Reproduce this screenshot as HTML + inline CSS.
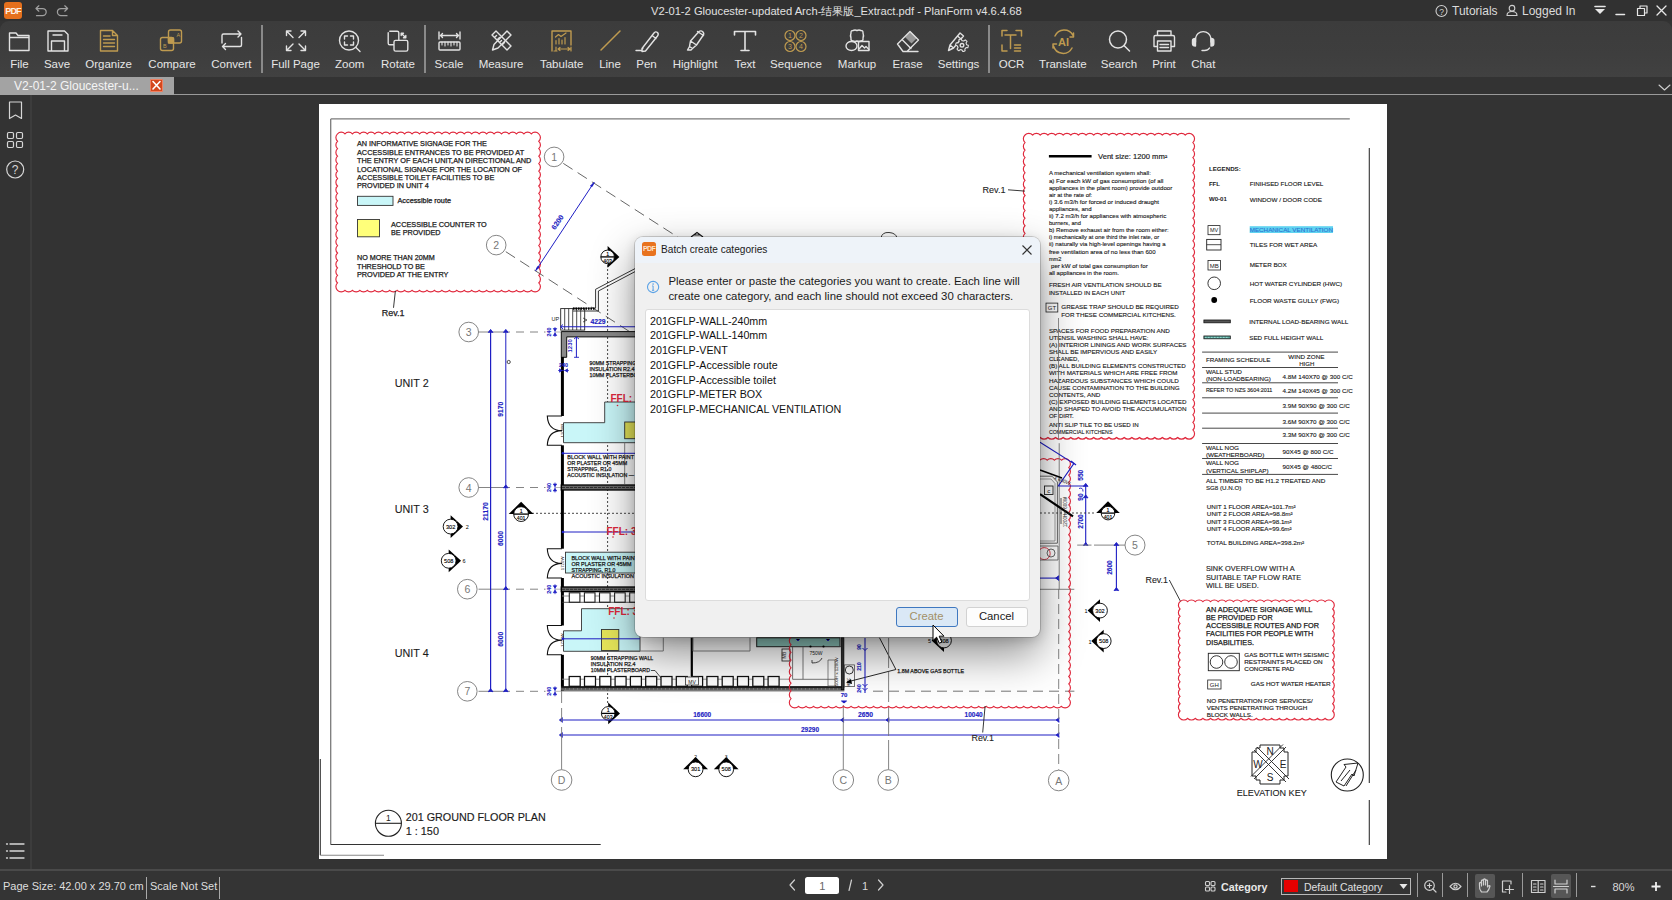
<!DOCTYPE html>
<html><head><meta charset="utf-8">
<style>
*{margin:0;padding:0;box-sizing:border-box}
html,body{width:1672px;height:900px;overflow:hidden;background:#333333;font-family:"Liberation Sans",sans-serif;position:relative}
.abs{position:absolute}
#titlebar{left:0;top:0;width:1672px;height:21px;background:#313131}
#toolbar{left:0;top:20.8px;width:1672px;height:56.2px;background:linear-gradient(#3c3c3c,#3e3e3e 60%,#414141);border-radius:9px 9px 0 0}
#tabbar{left:0;top:77px;width:1672px;height:18.3px;background:#333;border-bottom:1.6px solid #9a9a9a}
#sidebar{left:0;top:95px;width:32px;height:775px;background:#333;border-right:2px solid #3c3c3c}
#status{left:0;top:869px;width:1672px;height:31px;background:#343434;border-top:2px solid #4a4a4a}
.tl{position:absolute;top:57px;font-size:11.5px;line-height:14px;color:#e6e6e6;white-space:nowrap;transform:translateX(-50%)}
.t{position:absolute;white-space:nowrap}
.sep{position:absolute;top:25px;width:2px;height:48px;background:#8a8a8a}
#page{left:319px;top:104px;width:1068px;height:755px;background:#fff}
svg{position:absolute;left:0;top:0;overflow:visible}
</style></head><body>
<div id="titlebar" class="abs"></div>
<div id="toolbar" class="abs"></div>
<div id="tabbar" class="abs"></div>
<div id="sidebar" class="abs"></div>
<div id="status" class="abs"></div>
<div id="page" class="abs"></div>

<!-- title bar content -->
<div class="t" style="left:4px;top:2px;width:18px;height:17px;background:#e5701d;border-radius:3px"></div>
<div class="t" style="left:4px;top:4.5px;width:18px;text-align:center;font-size:9px;line-height:12px;font-weight:bold;color:#fdf0e6;letter-spacing:-0.9px">PDF</div>
<div class="t" style="left:651px;top:4px;font-size:11.2px;line-height:14px;color:#e0e0e0">V2-01-2 Gloucester-updated Arch-结果版_Extract.pdf - PlanForm v4.6.4.68</div>
<div class="t" style="left:1452px;top:4px;font-size:12px;line-height:14px;color:#dcdcdc">Tutorials</div>
<div class="t" style="left:1522px;top:4px;font-size:12px;line-height:14px;color:#dcdcdc">Logged In</div>

<!-- tab -->
<div class="t" style="left:0;top:77px;width:174px;height:18px;background:#a3a3a3"></div>
<div class="t" style="left:14px;top:78px;font-size:12px;line-height:16px;color:#f4f4f4">V2-01-2 Gloucester-u...</div>
<div class="t" style="left:150px;top:79px;width:13px;height:13px;background:#d4481e;border:1px solid #f08060;border-radius:1px"></div>

<!-- toolbar labels -->
<div class="tl" style="left:19.5px">File</div>
<div class="tl" style="left:57px">Save</div>
<div class="tl" style="left:108.6px">Organize</div>
<div class="tl" style="left:172px">Compare</div>
<div class="tl" style="left:231.4px">Convert</div>
<div class="sep" style="left:261px"></div>
<div class="tl" style="left:295.5px">Full Page</div>
<div class="tl" style="left:349.7px">Zoom</div>
<div class="tl" style="left:398px">Rotate</div>
<div class="sep" style="left:424px"></div>
<div class="tl" style="left:449px">Scale</div>
<div class="tl" style="left:501px">Measure</div>
<div class="tl" style="left:561.7px">Tabulate</div>
<div class="tl" style="left:610px">Line</div>
<div class="tl" style="left:646.5px">Pen</div>
<div class="tl" style="left:695px">Highlight</div>
<div class="tl" style="left:745px">Text</div>
<div class="tl" style="left:796px">Sequence</div>
<div class="tl" style="left:857px">Markup</div>
<div class="tl" style="left:907.6px">Erase</div>
<div class="tl" style="left:958.5px">Settings</div>
<div class="sep" style="left:988px"></div>
<div class="tl" style="left:1011.6px">OCR</div>
<div class="tl" style="left:1062.8px">Translate</div>
<div class="tl" style="left:1119px">Search</div>
<div class="tl" style="left:1164px">Print</div>
<div class="tl" style="left:1203.3px">Chat</div>

<!-- status bar text -->
<div class="t" style="left:3px;top:879px;font-size:11px;line-height:14px;color:#dedede">Page Size: 42.00 x 29.70 cm</div>
<div class="t" style="left:146px;top:877px;width:1px;height:22px;background:#aaa"></div>
<div class="t" style="left:150px;top:879px;font-size:11px;line-height:14px;color:#dedede">Scale Not Set</div>
<div class="t" style="left:219px;top:877px;width:1px;height:22px;background:#aaa"></div>

<!--STATUS--><div class="t" style="left:1475px;top:874px;width:20px;height:23.5px;background:#565656;border-radius:2px"></div>
<div class="t" style="left:1551px;top:874px;width:20px;height:23.5px;background:#565656;border-radius:2px"></div>
<svg width="1672" height="900" style="position:absolute;left:0;top:0;overflow:visible">
<g fill="none" stroke="#cfcfcf" stroke-width="1.2" stroke-linecap="round" stroke-linejoin="round">
<path d="M794.5 880 L790 885 L794.5 890"/>
<path d="M878.5 880 L883 885 L878.5 890"/>
<path d="M849 890.5 L851.5 880"/>
<g stroke="#d0d0d0" stroke-width="1.1"><rect x="1205.5" y="881.5" width="4" height="4" rx="1"/><rect x="1211" y="881.5" width="4" height="4" rx="1"/><rect x="1205.5" y="887" width="4" height="4" rx="1"/><rect x="1211" y="887" width="4" height="4" rx="1"/></g>
<circle cx="1429.5" cy="885.5" r="4.8"/><path d="M1433 889 L1436 892 M1427.5 885.5 H1431.5 M1429.5 883.5 V887.5"/>
<path d="M1450 886.5 Q1455.5 880 1461 886.5 Q1455.5 893 1450 886.5 Z"/><circle cx="1455.5" cy="886.5" r="1.6"/>
<path d="M1502.5 881 H1511 V884 M1502.5 881 V892 H1506 M1509.5 885.5 V893.5 M1505.5 889.5 H1513.5"/>
<path d="M1531.5 880.5 H1545 V892.5 H1531.5 Z M1538.2 880.5 V892.5 M1533.5 884 H1536 M1533.5 887 H1536 M1533.5 890 H1536 M1540.5 884 H1543 M1540.5 887 H1543 M1540.5 890 H1543"/>
<path d="M1555 880 V884 H1567 V880 M1555 893 V889 H1567 V893 M1553.5 886.5 H1568.5"/>
<path d="M1481.5 892 Q1479 889 1479.5 885.5 V883 Q1480.5 882 1481.5 883 V886 V880.5 Q1482.5 879.5 1483.5 880.5 V885 V879.5 Q1484.5 878.5 1485.5 879.5 V885 V880.5 Q1486.5 879.5 1487.5 880.5 V887 Q1489 885 1490 886 Q1489 890 1487 892 Z"/>
</g>
<path d="M1591 886.5 H1595.5" stroke="#e0e0e0" stroke-width="1.4"/>
<path d="M1651.5 886.5 H1660.5 M1656 882 V891" stroke="#f0f0f0" stroke-width="1.8"/>
<path d="M1399.5 884 H1407.5 L1403.5 889 Z" fill="#e8e8e8"/>
</svg>
<div class="t" style="left:805.3px;top:876.7px;width:34px;height:17.5px;background:#fff;border-radius:2.5px"></div>
<div class="t" style="left:805.3px;top:878.5px;width:34px;text-align:center;font-size:11px;line-height:14px;color:#666">1</div>
<div class="t" style="left:862px;top:879px;font-size:11px;line-height:14px;color:#d8d8d8">1</div>
<div class="t" style="left:1220.6px;top:879.5px;font-size:11.5px;line-height:14px;color:#e8e8e8;font-weight:bold;transform:scaleX(0.93);transform-origin:0 0">Category</div>
<div class="t" style="left:1280.9px;top:877.6px;width:130.6px;height:17.2px;border:1px solid #b8b8b8;background:transparent"></div>
<div class="t" style="left:1284.4px;top:880px;width:13.2px;height:12.4px;background:#e50000"></div>
<div class="t" style="left:1303.5px;top:879.5px;font-size:11px;line-height:14px;color:#e0e0e0;transform:scaleX(0.95);transform-origin:0 0">Default Category</div>
<div class="t" style="left:1417px;top:873px;width:1px;height:24px;background:#9a9a9a"></div>
<div class="t" style="left:1442px;top:873px;width:1px;height:24px;background:#9a9a9a"></div>
<div class="t" style="left:1467px;top:873px;width:1px;height:24px;background:#9a9a9a"></div>
<div class="t" style="left:1521.5px;top:873px;width:1px;height:24px;background:#9a9a9a"></div>
<div class="t" style="left:1575.5px;top:873px;width:1px;height:24px;background:#9a9a9a"></div>


<div class="t" style="left:1612.4px;top:879.5px;font-size:11px;line-height:14px;color:#d8d8d8">80%</div>
<!--/STATUS--><!--ICONS--><svg width="1672" height="900" viewBox="0 0 1672 900" style="position:absolute;left:0;top:0;pointer-events:none">
<g fill="none" stroke="#e2e2e2" stroke-width="1.4" stroke-linejoin="round" stroke-linecap="round">
<!-- undo / redo -->
<path d="M38.8 5.8 L36 8.5 L38.8 11.2 M36.3 8.5 H42.6 a3.6 3.6 0 0 1 0 7.2 H36.5" stroke="#a0a0a0" stroke-width="1.25"/>
<path d="M64.8 5.8 L67.6 8.5 L64.8 11.2 M67.3 8.5 H61 a3.6 3.6 0 0 0 0 7.2 H67" stroke="#a0a0a0" stroke-width="1.25"/>
<!-- File folder -->
<path d="M9.5 33 H16 L18 35.5 H29 V50.5 H9.5 Z M9.5 37.5 H29"/>
<!-- Save -->
<path d="M48 31 H64.5 L68 34.5 V51 H48 Z M53 35 H62 M51.5 51 V41 H64.5 V51"/>
<!-- Organize gold -->
<path d="M100.5 30.5 H112.5 L117.5 35.5 V51 H100.5 Z M112.5 30.5 V35.5 H117.5 M103.5 36 H110 M103.5 39.5 H114.5 M103.5 43 H114.5 M103.5 46.5 H114.5" stroke="#bf9b50"/>
<!-- Compare gold -->
<g stroke="#bf9b50"><rect x="168.5" y="30" width="13" height="13" rx="2"/><rect x="160.5" y="37.5" width="13" height="13" rx="2"/><rect x="168.5" y="38" width="5" height="5" fill="#bf9b50"/></g>
<text x="176.5" y="37.3" font-size="5.5" fill="#bf9b50" stroke="none" font-family="Liberation Sans">A</text>
<text x="163" y="48" font-size="5.5" fill="#bf9b50" stroke="none" font-family="Liberation Sans">B</text>
<!-- Convert -->
<path d="M222 43 V35.5 Q222 34 223.5 34 H241 M238 31 L241 34 L238 37 M241.5 37.5 V45 Q241.5 46.5 240 46.5 H222.5 M225.5 43.5 L222.5 46.5 L225.5 49.5"/>
<!-- Full page -->
<path d="M286.5 31 L293 37.5 M286.5 31 H291 M286.5 31 V35.5 M305.5 31 L299 37.5 M305.5 31 H301 M305.5 31 V35.5 M286.5 50.5 L293 44 M286.5 50.5 H291 M286.5 50.5 V46 M305.5 50.5 L299 44 M305.5 50.5 H301 M305.5 50.5 V46"/>
<!-- Zoom -->
<circle cx="349" cy="40.5" r="9.5"/><path d="M356 47.5 L360 51.5 M344.5 39 V36 H347.5 M350.5 36 H353.5 V39 M353.5 42 V45 H350.5 M347.5 45 H344.5 V42"/>
<!-- Rotate -->
<path d="M389.8 31.2 H397.2 Q398.8 31.2 398.8 32.8 V40.2 M388.2 32.8 V43.2 Q388.2 44.8 389.8 44.8 H394 M395.6 40.4 H406.2 Q407.8 40.4 407.8 42 V49.5 Q407.8 51.1 406.2 51.1 H395.6 Q394 51.1 394 49.5 V42 Q394 40.4 395.6 40.4 Z M401.5 33.5 L405.5 37.5 M401.2 35.5 V33.2 H403.5 M405.8 35.5 V37.8 H403.5"/>
<!-- Scale -->
<path d="M439 32 V39 M460 32 V39 M440.5 35.5 H458.5 M442.5 33.5 L440.5 35.5 L442.5 37.5 M456.5 33.5 L458.5 35.5 L456.5 37.5"/>
<rect x="439" y="42" width="21" height="8" rx="1"/><path d="M442 42 V45 M445 42 V46 M448 42 V45 M451 42 V46 M454 42 V45 M457 42 V46" stroke-width="1.1"/>
<!-- Measure -->
<path d="M492 35 L496 31 L511 46 L507 50 Z M494.5 37.5 L496.5 35.5 M497 40 L499.5 37.5 M499.5 42.5 L501.5 40.5 M502 45 L504.5 42.5"/>
<path d="M507 31 L511 35 L498 48 L492.5 50 L494 44.5 Z"/>
<!-- Tabulate gold -->
<g stroke="#bf9b50"><path d="M552 51 V31 H571 V45"/><path d="M557 51 H554 M556 51 V47 M571 47 V51 M558 49 H570 M560 47.5 L558 49 L560 50.5 M568 47.5 L570 49 L568 50.5 M555.5 37 L558.5 34.5 L561 36.5 L566 33 M556 44 V40.5 M559 44 V38.5 M562 44 V40 M565 44 V37.5" stroke-width="1.2"/></g>
<!-- Line gold -->
<path d="M601 50 L620 31" stroke="#bf9b50" stroke-width="1.5"/>
<!-- Pen -->
<path d="M636 50.5 H641.5 L643 48 M642 48.5 L654 33 Q655.5 31 657.5 32.5 Q659 34 657.5 36 L645.5 51 L642 51.5 Z M652 35.5 L656 38.5"/>
<!-- Highlight -->
<path d="M699 31.5 Q701 30 703 32 Q704.5 34 703 35.5 L696.5 45 L690.5 41 Z M697.5 31.5 L703.5 35.5 M690.5 41 L689.5 46.5 L692.5 48.5 L696.5 45 M689.5 46.5 L687.5 50 H691 L692.5 48.5"/>
<!-- Text -->
<path d="M734.5 35 V31.5 H755.5 V35 M745 31.5 V50.5 M741 50.5 H749" stroke-width="1.6"/>
<!-- Sequence gold -->
<g stroke="#bf9b50" stroke-width="1.2"><circle cx="790" cy="35.5" r="5"/><circle cx="801" cy="35.5" r="5"/><circle cx="790" cy="46.5" r="5"/><circle cx="801" cy="46.5" r="5"/></g>
<g fill="#bf9b50" stroke="none" font-family="Liberation Sans" font-size="7" text-anchor="middle"><text x="790" y="38">1</text><text x="801" y="38">2</text><text x="790" y="49">3</text><text x="801" y="49">4</text></g>
<!-- Markup -->
<path d="M853 30.5 Q855 29.5 857 30.5 Q859 29.5 861 30.5 Q863.3 30.5 863 33 Q864 35.5 863 38 Q863.5 41 861 41 Q859 42 857 41 Q855 42 853 41 Q850.5 41 851 38 Q850 35.5 851 33 Q850.7 30.5 853 30.5 Z"/>
<ellipse cx="851.5" cy="46" rx="5.5" ry="4.5"/><rect x="858.5" y="41.5" width="10.5" height="9"/><path d="M859 49 L862 45.5 L864.5 48 L866 46.5 L869 49.5"/>
<!-- Erase -->
<path d="M897.5 44 L910 31.5 L918.5 40 L907 51.5 H903 Z M902 39.5 L911 48.5 M907 51.5 H918"/>
<path d="M905 37 L910.5 31.5 L917 38 L911.5 43.5 Z" stroke="none" fill="#e2e2e2" opacity="0.55"/>
<!-- Settings -->
<path d="M948.5 50.5 L950 45 L960 33 L963.5 36 L953.5 48 Z M950 45 L953.5 48 M957.5 36 L961 39"/>
<path d="M968.25 46.12 L968.09 46.93 L967.82 47.71 L965.99 47.60 L965.65 48.10 L965.26 48.55 L964.80 48.95 L965.15 50.75 L964.42 51.12 L963.64 51.38 L962.83 51.55 L962.00 49.90 L961.40 49.86 L960.81 49.74 L960.24 49.55 L958.85 50.76 L958.17 50.30 L957.55 49.76 L957.01 49.14 L958.02 47.60 L957.75 47.06 L957.56 46.49 L957.44 45.90 L955.70 45.31 L955.75 44.48 L955.91 43.67 L956.18 42.89 L958.01 43.00 L958.35 42.50 L958.74 42.05 L959.20 41.65 L958.85 39.85 L959.58 39.48 L960.36 39.22 L961.17 39.05 L962.00 40.70 L962.60 40.74 L963.19 40.86 L963.76 41.05 L965.15 39.84 L965.83 40.30 L966.45 40.84 L966.99 41.46 L965.98 43.00 L966.25 43.54 L966.44 44.11 L966.56 44.70 L968.30 45.29Z" stroke-width="1.1" fill="#3d3d3d"/><circle cx="962" cy="45.3" r="1.8"/>
<!-- OCR gold -->
<g stroke="#bf9b50" stroke-width="1.5"><path d="M1002 36 V30.5 H1007 M1016 30.5 H1021.5 V36 M1002 45 V51 H1007 M1005 35 H1016 M1010.5 35 V48.5 M1014.5 45 H1020.5 M1014.5 48 H1020.5 M1014.5 51 H1020.5"/></g>
<!-- Translate gold -->
<g stroke="#bf9b50" stroke-width="1.5"><path d="M1055 36 A10 10 0 0 1 1073 35.5 M1072 48 A10 10 0 0 1 1053.5 46 M1073.5 33 V37 H1070 M1053 48 V44 H1056.5"/></g>
<text x="1063.5" y="45.5" font-size="11" font-weight="bold" fill="#bf9b50" stroke="none" font-family="Liberation Sans" text-anchor="middle">AI</text>
<!-- Search -->
<circle cx="1118" cy="39.5" r="8.5" stroke-width="1.5"/><path d="M1124 45.5 L1129.5 51" stroke-width="1.5"/>
<!-- Print -->
<path d="M1157.5 35.5 V31 H1171 V35.5 M1157 46.5 H1154 V37 Q1154 35.5 1155.5 35.5 H1173 Q1174.5 35.5 1174.5 37 V46.5 H1171.5 M1157.5 41 H1171 V51 H1157.5 Z M1160 44.5 H1168.5 M1160 47.5 H1168.5"/>
<!-- Chat headset -->
<path d="M1195.5 42 V38.5 A7.8 7.8 0 0 1 1211 38.5 V42 M1209.5 48 Q1208 50.5 1204.5 50.5 H1202"/>
<path d="M1192.5 40.5 Q1192.5 38.5 1195.5 38.5 V46 Q1192.5 46 1192.5 43.5 Z M1213.8 40.5 Q1213.8 38.5 1211 38.5 V46 Q1213.8 46 1213.8 43.5 Z" fill="#e2e2e2"/>
<!-- title right icons -->
<circle cx="1441.5" cy="11" r="5.5" stroke="#cfcfcf" stroke-width="1.1"/>
<text x="1441.5" y="14.5" font-size="8.5" fill="#cfcfcf" stroke="none" font-family="Liberation Sans" text-anchor="middle">?</text>
<circle cx="1512" cy="8.2" r="2.8" stroke="#cfcfcf" stroke-width="1.1"/><path d="M1507 15.5 Q1507 11.5 1512 11.5 Q1517 11.5 1517 15.5 Z" stroke="#cfcfcf" stroke-width="1.1"/>
<path d="M1595 6.5 H1605" stroke="#e8e8e8" stroke-width="1.6"/><path d="M1595 9 H1605 L1600 14 Z" fill="#e8e8e8" stroke="none"/>
<path d="M1616 14.5 H1624.5" stroke="#e8e8e8" stroke-width="1.5"/>
<path d="M1637.5 8.5 H1644.5 V15.5 H1637.5 Z M1640 8.5 V6 H1647 V13 H1644.5" stroke="#e8e8e8" stroke-width="1.2"/>
<path d="M1657 6 L1666 15 M1666 6 L1657 15" stroke="#e8e8e8" stroke-width="1.3"/>
<!-- tab close x -->
<path d="M153 81.5 L160 89 M160 81.5 L153 89" stroke="#fff" stroke-width="1.6"/>
<!-- tabbar chevron -->
<path d="M1659 85 L1664.5 90 L1670 85" stroke="#cfcfcf" stroke-width="1.1"/>
<!-- sidebar icons -->
<path d="M9.5 102 H21.5 V118.5 L15.5 115 L9.5 118.5 Z" stroke="#d6d6d6" stroke-width="1.2"/>
<g stroke="#d6d6d6" stroke-width="1.2"><rect x="7.5" y="132.5" width="6" height="6" rx="1.2"/><rect x="16.5" y="132.5" width="6" height="6" rx="1.2"/><rect x="7.5" y="141.5" width="6" height="6" rx="1.2"/><rect x="16.5" y="141.5" width="6" height="6" rx="1.2"/></g>
<circle cx="15.2" cy="169.5" r="8.5" stroke="#d6d6d6" stroke-width="1.2"/>
<text x="15.2" y="174" font-size="12" fill="#d6d6d6" stroke="none" font-family="Liberation Sans" text-anchor="middle">?</text>
<g stroke="#d8d8d8" stroke-width="1.3"><path d="M10 844 H24 M10 851 H24 M10 858 H24"/><path d="M6.5 844 H7.5 M6.5 851 H7.5 M6.5 858 H7.5"/></g>
</g>
</svg>
<!--/ICONS-->
<!--PAGE--><svg width="1672" height="900" viewBox="0 0 1672 900" style="position:absolute;left:0;top:0">
<line x1="330.7" y1="118.9" x2="1349.8" y2="118.9" stroke="#7a7a7a" stroke-width="1.3" />
<line x1="330.7" y1="118.9" x2="330.7" y2="844.5" stroke="#7a7a7a" stroke-width="1.3" />
<line x1="330.7" y1="844.5" x2="600.7" y2="844.5" stroke="#333" stroke-width="1.1" />
<line x1="320.3" y1="759" x2="320.3" y2="855.3" stroke="#333" stroke-width="1.1" />
<line x1="320.3" y1="855.3" x2="384" y2="855.3" stroke="#888" stroke-width="1.1" />
<line x1="1369.3" y1="148" x2="1369.3" y2="783" stroke="#333" stroke-width="1.1" />
<line x1="1369.3" y1="800" x2="1369.3" y2="845" stroke="#333" stroke-width="1.1" />
<path d="M337.5 133.8 A5.07 5.07 0 0 1 344.96 133.80 A5.07 5.07 0 0 1 352.41 133.80 A5.07 5.07 0 0 1 359.87 133.80 A5.07 5.07 0 0 1 367.32 133.80 A5.07 5.07 0 0 1 374.78 133.80 A5.07 5.07 0 0 1 382.23 133.80 A5.07 5.07 0 0 1 389.69 133.80 A5.07 5.07 0 0 1 397.14 133.80 A5.07 5.07 0 0 1 404.60 133.80 A5.07 5.07 0 0 1 412.06 133.80 A5.07 5.07 0 0 1 419.51 133.80 A5.07 5.07 0 0 1 426.97 133.80 A5.07 5.07 0 0 1 434.42 133.80 A5.07 5.07 0 0 1 441.88 133.80 A5.07 5.07 0 0 1 449.33 133.80 A5.07 5.07 0 0 1 456.79 133.80 A5.07 5.07 0 0 1 464.24 133.80 A5.07 5.07 0 0 1 471.70 133.80 A5.07 5.07 0 0 1 479.16 133.80 A5.07 5.07 0 0 1 486.61 133.80 A5.07 5.07 0 0 1 494.07 133.80 A5.07 5.07 0 0 1 501.52 133.80 A5.07 5.07 0 0 1 508.98 133.80 A5.07 5.07 0 0 1 516.43 133.80 A5.07 5.07 0 0 1 523.89 133.80 A5.07 5.07 0 0 1 531.34 133.80 A5.07 5.07 0 0 1 538.80 133.80 A5.07 5.07 0 0 1 538.80 141.25 A5.07 5.07 0 0 1 538.80 148.70 A5.07 5.07 0 0 1 538.80 156.16 A5.07 5.07 0 0 1 538.80 163.61 A5.07 5.07 0 0 1 538.80 171.06 A5.07 5.07 0 0 1 538.80 178.51 A5.07 5.07 0 0 1 538.80 185.97 A5.07 5.07 0 0 1 538.80 193.42 A5.07 5.07 0 0 1 538.80 200.87 A5.07 5.07 0 0 1 538.80 208.32 A5.07 5.07 0 0 1 538.80 215.78 A5.07 5.07 0 0 1 538.80 223.23 A5.07 5.07 0 0 1 538.80 230.68 A5.07 5.07 0 0 1 538.80 238.13 A5.07 5.07 0 0 1 538.80 245.59 A5.07 5.07 0 0 1 538.80 253.04 A5.07 5.07 0 0 1 538.80 260.49 A5.07 5.07 0 0 1 538.80 267.94 A5.07 5.07 0 0 1 538.80 275.40 A5.07 5.07 0 0 1 538.80 282.85 A5.07 5.07 0 0 1 538.80 290.30 A5.07 5.07 0 0 1 531.34 290.30 A5.07 5.07 0 0 1 523.89 290.30 A5.07 5.07 0 0 1 516.43 290.30 A5.07 5.07 0 0 1 508.98 290.30 A5.07 5.07 0 0 1 501.52 290.30 A5.07 5.07 0 0 1 494.07 290.30 A5.07 5.07 0 0 1 486.61 290.30 A5.07 5.07 0 0 1 479.16 290.30 A5.07 5.07 0 0 1 471.70 290.30 A5.07 5.07 0 0 1 464.24 290.30 A5.07 5.07 0 0 1 456.79 290.30 A5.07 5.07 0 0 1 449.33 290.30 A5.07 5.07 0 0 1 441.88 290.30 A5.07 5.07 0 0 1 434.42 290.30 A5.07 5.07 0 0 1 426.97 290.30 A5.07 5.07 0 0 1 419.51 290.30 A5.07 5.07 0 0 1 412.06 290.30 A5.07 5.07 0 0 1 404.60 290.30 A5.07 5.07 0 0 1 397.14 290.30 A5.07 5.07 0 0 1 389.69 290.30 A5.07 5.07 0 0 1 382.23 290.30 A5.07 5.07 0 0 1 374.78 290.30 A5.07 5.07 0 0 1 367.32 290.30 A5.07 5.07 0 0 1 359.87 290.30 A5.07 5.07 0 0 1 352.41 290.30 A5.07 5.07 0 0 1 344.96 290.30 A5.07 5.07 0 0 1 337.50 290.30 A5.07 5.07 0 0 1 337.50 282.85 A5.07 5.07 0 0 1 337.50 275.40 A5.07 5.07 0 0 1 337.50 267.94 A5.07 5.07 0 0 1 337.50 260.49 A5.07 5.07 0 0 1 337.50 253.04 A5.07 5.07 0 0 1 337.50 245.59 A5.07 5.07 0 0 1 337.50 238.13 A5.07 5.07 0 0 1 337.50 230.68 A5.07 5.07 0 0 1 337.50 223.23 A5.07 5.07 0 0 1 337.50 215.78 A5.07 5.07 0 0 1 337.50 208.32 A5.07 5.07 0 0 1 337.50 200.87 A5.07 5.07 0 0 1 337.50 193.42 A5.07 5.07 0 0 1 337.50 185.97 A5.07 5.07 0 0 1 337.50 178.51 A5.07 5.07 0 0 1 337.50 171.06 A5.07 5.07 0 0 1 337.50 163.61 A5.07 5.07 0 0 1 337.50 156.16 A5.07 5.07 0 0 1 337.50 148.70 A5.07 5.07 0 0 1 337.50 141.25 A5.07 5.07 0 0 1 337.50 133.80Z" fill="none" stroke="#e0283c" stroke-width="1.15"/>
<text x="357" y="146.4" font-size="7.3" fill="#1a1a1a" text-anchor="start" font-weight="normal" font-family="Liberation Sans" textLength="129.8" lengthAdjust="spacingAndGlyphs" stroke="#1a1a1a" stroke-width="0.25">AN INFORMATIVE SIGNAGE FOR THE</text>
<text x="357" y="154.7" font-size="7.3" fill="#1a1a1a" text-anchor="start" font-weight="normal" font-family="Liberation Sans" textLength="167.1" lengthAdjust="spacingAndGlyphs" stroke="#1a1a1a" stroke-width="0.25">ACCESSIBLE ENTRANCES TO BE PROVIDED AT</text>
<text x="357" y="163.0" font-size="7.3" fill="#1a1a1a" text-anchor="start" font-weight="normal" font-family="Liberation Sans" textLength="174.4" lengthAdjust="spacingAndGlyphs" stroke="#1a1a1a" stroke-width="0.25">THE ENTRY OF EACH UNIT,AN DIRECTIONAL AND</text>
<text x="357" y="171.5" font-size="7.3" fill="#1a1a1a" text-anchor="start" font-weight="normal" font-family="Liberation Sans" textLength="165.0" lengthAdjust="spacingAndGlyphs" stroke="#1a1a1a" stroke-width="0.25">LOCATIONAL SIGNAGE FOR THE LOCATION OF</text>
<text x="357" y="179.8" font-size="7.3" fill="#1a1a1a" text-anchor="start" font-weight="normal" font-family="Liberation Sans" textLength="137.3" lengthAdjust="spacingAndGlyphs" stroke="#1a1a1a" stroke-width="0.25">ACCESSIBLE TOILET FACILITIES TO BE</text>
<text x="357" y="188.2" font-size="7.3" fill="#1a1a1a" text-anchor="start" font-weight="normal" font-family="Liberation Sans" textLength="71.8" lengthAdjust="spacingAndGlyphs" stroke="#1a1a1a" stroke-width="0.25">PROVIDED IN UNIT 4</text>
<rect x="357.5" y="196.3" width="35.5" height="9.1" fill="#c9f6f8" stroke="#333" stroke-width="0.9" />
<text x="397.5" y="202.5" font-size="6.8" fill="#1a1a1a" text-anchor="start" font-weight="normal" font-family="Liberation Sans" textLength="53.5" lengthAdjust="spacingAndGlyphs" stroke="#1a1a1a" stroke-width="0.25">Accessible route</text>
<rect x="357.5" y="219.5" width="22" height="17.3" fill="#ffff7a" stroke="#333" stroke-width="0.9" />
<text x="391" y="226.8" font-size="7.3" fill="#1a1a1a" text-anchor="start" font-weight="normal" font-family="Liberation Sans" textLength="95.8" lengthAdjust="spacingAndGlyphs" stroke="#1a1a1a" stroke-width="0.25">ACCESSIBLE COUNTER TO</text>
<text x="391" y="235.2" font-size="7.3" fill="#1a1a1a" text-anchor="start" font-weight="normal" font-family="Liberation Sans" textLength="49.5" lengthAdjust="spacingAndGlyphs" stroke="#1a1a1a" stroke-width="0.25">BE PROVIDED</text>
<text x="357" y="260.0" font-size="7.3" fill="#1a1a1a" text-anchor="start" font-weight="normal" font-family="Liberation Sans" textLength="77.8" lengthAdjust="spacingAndGlyphs" stroke="#1a1a1a" stroke-width="0.25">NO MORE THAN 20MM</text>
<text x="357" y="268.5" font-size="7.3" fill="#1a1a1a" text-anchor="start" font-weight="normal" font-family="Liberation Sans" textLength="67.9" lengthAdjust="spacingAndGlyphs" stroke="#1a1a1a" stroke-width="0.25">THRESHOLD TO BE</text>
<text x="357" y="276.8" font-size="7.3" fill="#1a1a1a" text-anchor="start" font-weight="normal" font-family="Liberation Sans" textLength="91.4" lengthAdjust="spacingAndGlyphs" stroke="#1a1a1a" stroke-width="0.25">PROVIDED AT THE ENTRY</text>
<line x1="395.4" y1="290.8" x2="393.5" y2="307.8" stroke="#222" stroke-width="0.9" />
<text x="381.8" y="316.4" font-size="9" fill="#222" text-anchor="start" font-weight="normal" font-family="Liberation Sans" textLength="22.7" lengthAdjust="spacingAndGlyphs" stroke="#222" stroke-width="0.25">Rev.1</text>
<circle cx="554.1" cy="156.9" r="9.8" fill="#fff" stroke="#777" stroke-width="0.9"/>
<text x="554.1" y="160.9" font-size="10.5" fill="#777" text-anchor="middle" font-weight="normal" font-family="Liberation Sans" >1</text>
<circle cx="496.2" cy="245.1" r="9.8" fill="#fff" stroke="#777" stroke-width="0.9"/>
<text x="496.2" y="249.1" font-size="10.5" fill="#777" text-anchor="middle" font-weight="normal" font-family="Liberation Sans" >2</text>
<line x1="563.3" y1="163.4" x2="680" y2="238.5" stroke="#555" stroke-width="0.9" stroke-dasharray="11 6" />
<line x1="505.8" y1="251.7" x2="650" y2="344.8" stroke="#555" stroke-width="0.9" stroke-dasharray="11 6" />
<line x1="594" y1="182.5" x2="535.8" y2="270.5" stroke="#1e1ec4" stroke-width="1.0" />
<polygon points="594,182.5 590.5,186 592.3,186.3" fill="#1e1ec4" stroke="#1e1ec4" stroke-width="1"/><polygon points="535.8,270.5 539.3,267 537.5,266.7" fill="#1e1ec4" stroke="#1e1ec4" stroke-width="1"/>
<text x="559.5" y="223.5" font-size="7" fill="#1e1ec4" text-anchor="middle" font-family="Liberation Sans" transform="rotate(-56.5 559.5 223.5)" font-weight="bold" stroke="#1e1ec4" stroke-width="0.15" textLength="16" lengthAdjust="spacingAndGlyphs">6200</text>
<circle cx="468.7" cy="332" r="9.8" fill="#fff" stroke="#777" stroke-width="0.9"/>
<text x="468.7" y="336" font-size="10.5" fill="#777" text-anchor="middle" font-weight="normal" font-family="Liberation Sans" >3</text>
<circle cx="468.7" cy="487.5" r="9.8" fill="#fff" stroke="#777" stroke-width="0.9"/>
<text x="468.7" y="491.5" font-size="10.5" fill="#777" text-anchor="middle" font-weight="normal" font-family="Liberation Sans" >4</text>
<circle cx="467.3" cy="589.2" r="9.8" fill="#fff" stroke="#777" stroke-width="0.9"/>
<text x="467.3" y="593.2" font-size="10.5" fill="#777" text-anchor="middle" font-weight="normal" font-family="Liberation Sans" >6</text>
<circle cx="467.3" cy="691.3" r="9.8" fill="#fff" stroke="#777" stroke-width="0.9"/>
<text x="467.3" y="695.3" font-size="10.5" fill="#777" text-anchor="middle" font-weight="normal" font-family="Liberation Sans" >7</text>
<line x1="478.5" y1="332" x2="510" y2="332" stroke="#777" stroke-width="0.9" />
<line x1="516" y1="332" x2="545.5" y2="332" stroke="#777" stroke-width="0.9" stroke-dasharray="8 6" />
<line x1="555.5" y1="332" x2="561" y2="332" stroke="#999" stroke-width="0.7" />
<path d="M553.3 328.5 L555 331 L556.7 328.5 Z M553.3 335.5 L555 333 L556.7 335.5 Z M555 327 V337" fill="#1e1ec4" stroke="#1e1ec4" stroke-width="0.7"/>
<text x="551.3" y="332" font-size="6" fill="#1e1ec4" text-anchor="middle" font-family="Liberation Sans" transform="rotate(-90 551.3 332)" font-weight="bold" stroke="#1e1ec4" stroke-width="0.1" textLength="9" lengthAdjust="spacingAndGlyphs">240</text>
<line x1="478.5" y1="487.5" x2="510" y2="487.5" stroke="#777" stroke-width="0.9" />
<line x1="516" y1="487.5" x2="545.5" y2="487.5" stroke="#777" stroke-width="0.9" stroke-dasharray="8 6" />
<line x1="555.5" y1="487.5" x2="561" y2="487.5" stroke="#999" stroke-width="0.7" />
<path d="M553.3 484.0 L555 486.5 L556.7 484.0 Z M553.3 491.0 L555 488.5 L556.7 491.0 Z M555 482.5 V492.5" fill="#1e1ec4" stroke="#1e1ec4" stroke-width="0.7"/>
<text x="551.3" y="487.5" font-size="6" fill="#1e1ec4" text-anchor="middle" font-family="Liberation Sans" transform="rotate(-90 551.3 487.5)" font-weight="bold" stroke="#1e1ec4" stroke-width="0.1" textLength="9" lengthAdjust="spacingAndGlyphs">240</text>
<line x1="478.5" y1="589.2" x2="510" y2="589.2" stroke="#777" stroke-width="0.9" />
<line x1="516" y1="589.2" x2="545.5" y2="589.2" stroke="#777" stroke-width="0.9" stroke-dasharray="8 6" />
<line x1="555.5" y1="589.2" x2="561" y2="589.2" stroke="#999" stroke-width="0.7" />
<path d="M553.3 585.7 L555 588.2 L556.7 585.7 Z M553.3 592.7 L555 590.2 L556.7 592.7 Z M555 584.2 V594.2" fill="#1e1ec4" stroke="#1e1ec4" stroke-width="0.7"/>
<text x="551.3" y="589.2" font-size="6" fill="#1e1ec4" text-anchor="middle" font-family="Liberation Sans" transform="rotate(-90 551.3 589.2)" font-weight="bold" stroke="#1e1ec4" stroke-width="0.1" textLength="9" lengthAdjust="spacingAndGlyphs">240</text>
<line x1="478.5" y1="691.3" x2="510" y2="691.3" stroke="#777" stroke-width="0.9" />
<line x1="516" y1="691.3" x2="545.5" y2="691.3" stroke="#777" stroke-width="0.9" stroke-dasharray="8 6" />
<line x1="555.5" y1="691.3" x2="561" y2="691.3" stroke="#999" stroke-width="0.7" />
<path d="M553.3 687.8 L555 690.3 L556.7 687.8 Z M553.3 694.8 L555 692.3 L556.7 694.8 Z M555 686.3 V696.3" fill="#1e1ec4" stroke="#1e1ec4" stroke-width="0.7"/>
<text x="551.3" y="691.3" font-size="6" fill="#1e1ec4" text-anchor="middle" font-family="Liberation Sans" transform="rotate(-90 551.3 691.3)" font-weight="bold" stroke="#1e1ec4" stroke-width="0.1" textLength="9" lengthAdjust="spacingAndGlyphs">240</text>
<line x1="490.6" y1="332" x2="490.6" y2="691.3" stroke="#1e1ec4" stroke-width="1.2" />
<line x1="505.8" y1="332" x2="505.8" y2="691.3" stroke="#1e1ec4" stroke-width="1.0" />
<polygon points="505.8,329.4 503.5,332.4 505.8,332 508.1,332.4" fill="#1e1ec4" stroke="#1e1ec4" stroke-width="0.9" stroke-linejoin="round"/>
<polygon points="505.8,484.9 503.5,487.9 505.8,487.5 508.1,487.9" fill="#1e1ec4" stroke="#1e1ec4" stroke-width="0.9" stroke-linejoin="round"/>
<polygon points="505.8,586.6 503.5,589.6 505.8,589.2 508.1,589.6" fill="#1e1ec4" stroke="#1e1ec4" stroke-width="0.9" stroke-linejoin="round"/>
<polygon points="505.8,688.6999999999999 503.5,691.6999999999999 505.8,691.3 508.1,691.6999999999999" fill="#1e1ec4" stroke="#1e1ec4" stroke-width="0.9" stroke-linejoin="round"/>
<polygon points="490.6,329.4 488.3,332.4 490.6,332 492.90000000000003,332.4" fill="#1e1ec4" stroke="#1e1ec4" stroke-width="0.9" stroke-linejoin="round"/>
<polygon points="490.6,688.6999999999999 488.3,691.6999999999999 490.6,691.3 492.90000000000003,691.6999999999999" fill="#1e1ec4" stroke="#1e1ec4" stroke-width="0.9" stroke-linejoin="round"/>
<text x="503" y="409.3" font-size="7" fill="#1e1ec4" text-anchor="middle" font-family="Liberation Sans" transform="rotate(-90 503 409.3)" font-weight="bold" stroke="#1e1ec4" stroke-width="0.15" textLength="15" lengthAdjust="spacingAndGlyphs">9170</text>
<text x="503" y="538.6" font-size="7" fill="#1e1ec4" text-anchor="middle" font-family="Liberation Sans" transform="rotate(-90 503 538.6)" font-weight="bold" stroke="#1e1ec4" stroke-width="0.15" textLength="15" lengthAdjust="spacingAndGlyphs">6000</text>
<text x="503" y="639.3" font-size="7" fill="#1e1ec4" text-anchor="middle" font-family="Liberation Sans" transform="rotate(-90 503 639.3)" font-weight="bold" stroke="#1e1ec4" stroke-width="0.15" textLength="15" lengthAdjust="spacingAndGlyphs">6000</text>
<text x="488" y="511.4" font-size="7" fill="#1e1ec4" text-anchor="middle" font-family="Liberation Sans" transform="rotate(-90 488 511.4)" font-weight="bold" stroke="#1e1ec4" stroke-width="0.15" textLength="18.5" lengthAdjust="spacingAndGlyphs">21170</text>
<circle cx="508.7" cy="362" r="1.6" fill="none" stroke="#222" stroke-width="0.8"/>
<text x="394.8" y="387.2" font-size="11" fill="#1a1a1a" text-anchor="start" font-weight="normal" font-family="Liberation Sans" textLength="33.9" lengthAdjust="spacingAndGlyphs" stroke="#1a1a1a" stroke-width="0.1">UNIT 2</text>
<text x="394.8" y="513.3" font-size="11" fill="#1a1a1a" text-anchor="start" font-weight="normal" font-family="Liberation Sans" textLength="33.9" lengthAdjust="spacingAndGlyphs" stroke="#1a1a1a" stroke-width="0.1">UNIT 3</text>
<text x="394.8" y="657.2" font-size="11" fill="#1a1a1a" text-anchor="start" font-weight="normal" font-family="Liberation Sans" textLength="33.9" lengthAdjust="spacingAndGlyphs" stroke="#1a1a1a" stroke-width="0.1">UNIT 4</text>
<polygon points="450.6 515.2 463.0 526.6 450.6 538.0" fill="#000"/>
<circle cx="450.6" cy="526.6" r="7.4" fill="#fff" stroke="#000" stroke-width="0.9"/>
<text x="450.6" y="528.6" font-size="5.6" fill="#000" text-anchor="middle" font-weight="normal" font-family="Liberation Sans" stroke="#000" stroke-width="0.12">302</text>
<text x="465.8" y="529" font-size="5.5" fill="#000" text-anchor="start" font-weight="normal" font-family="Liberation Sans" >2</text>
<polygon points="448.7 549.4 461.09999999999997 560.8 448.7 572.1999999999999" fill="#000"/>
<circle cx="448.7" cy="560.8" r="7.4" fill="#fff" stroke="#000" stroke-width="0.9"/>
<text x="448.7" y="562.8" font-size="5.6" fill="#000" text-anchor="middle" font-weight="normal" font-family="Liberation Sans" stroke="#000" stroke-width="0.12">508</text>
<text x="462.5" y="563" font-size="5.5" fill="#000" text-anchor="start" font-weight="normal" font-family="Liberation Sans" >6</text>
<polygon points="607.6 246.09999999999997 619.4 256.9 607.6 267.7" fill="#000"/>
<circle cx="607.6" cy="256.9" r="6.8" fill="#fff" stroke="#000" stroke-width="0.9"/>
<line x1="600.8000000000001" y1="256.9" x2="614.4" y2="256.9" stroke="#000" stroke-width="1.3" />
<text x="607.6" y="255.59999999999997" font-size="5.2" fill="#000" text-anchor="middle" font-weight="normal" font-family="Liberation Sans" stroke="#000" stroke-width="0.12">1</text>
<text x="607.6" y="262.5" font-size="5.2" fill="#000" text-anchor="middle" font-weight="normal" font-family="Liberation Sans" stroke="#000" stroke-width="0.12">403</text>
<line x1="607.6" y1="265" x2="607.6" y2="703" stroke="#333" stroke-width="0.9" stroke-dasharray="2 2" />
<line x1="532" y1="513.3" x2="640" y2="513.3" stroke="#333" stroke-width="0.9" stroke-dasharray="2 2" />
<rect x="560.7" y="308.6" width="24" height="21.5" fill="none" stroke="#222" stroke-width="0.9" />
<line x1="564.7" y1="308.6" x2="564.7" y2="330" stroke="#222" stroke-width="0.8" />
<line x1="568.7" y1="308.6" x2="568.7" y2="330" stroke="#222" stroke-width="0.8" />
<line x1="572.7" y1="308.6" x2="572.7" y2="330" stroke="#222" stroke-width="0.8" />
<line x1="576.7" y1="308.6" x2="576.7" y2="330" stroke="#222" stroke-width="0.8" />
<line x1="580.7" y1="308.6" x2="580.7" y2="330" stroke="#222" stroke-width="0.8" />
<path d="M572.7 308.2 H595.6 V289.3 L640 266 M573 311 H598.4 V291 L640 269" fill="none" stroke="#222" stroke-width="0.9"/>
<line x1="573" y1="308.6" x2="595" y2="308.6" stroke="#000" stroke-width="2.2" stroke-dasharray="1.5 1" />
<text x="551.5" y="321.3" font-size="5.5" fill="#222" text-anchor="start" font-weight="normal" font-family="Liberation Sans" >UP</text>
<path d="M583 318 L587 320 L583 322" fill="none" stroke="#222" stroke-width="0.7"/>
<line x1="561" y1="326.7" x2="640" y2="326.7" stroke="#1e1ec4" stroke-width="1.1" />
<path d="M563 324.5 L560.5 326.7 L563 329" fill="none" stroke="#1e1ec4" stroke-width="1"/>
<text x="598" y="323.5" font-size="6.8" fill="#1e1ec4" text-anchor="middle" font-family="Liberation Sans" font-weight="bold" stroke="#1e1ec4" stroke-width="0.15" textLength="15" lengthAdjust="spacingAndGlyphs">4229</text>
<path d="M561.3 331.6 H640 V336.9 H566.7 V357.3 H561.3 Z" fill="#8a8a8a" stroke="#111" stroke-width="1"/>
<line x1="562.4" y1="357" x2="562.4" y2="416" stroke="#000" stroke-width="3" />
<line x1="562.4" y1="445.3" x2="562.4" y2="548.7" stroke="#000" stroke-width="3" />
<line x1="562.4" y1="578" x2="562.4" y2="625.5" stroke="#000" stroke-width="3" />
<line x1="562.4" y1="654.8" x2="562.4" y2="691" stroke="#000" stroke-width="3" />
<path d="M562 416 H547.3 Q548 430.65 562 430.65 M562 445.3 H547.3 Q548 430.65 562 430.65" fill="none" stroke="#111" stroke-width="1.1"/>
<text x="563.8" y="430.65" font-size="4.3" fill="#222" text-anchor="middle" font-weight="normal" font-family="Liberation Sans" transform="rotate(-90 563.8 430.65)" >1200W</text>
<path d="M562 548.7 H547.3 Q548 563.35 562 563.35 M562 578 H547.3 Q548 563.35 562 563.35" fill="none" stroke="#111" stroke-width="1.1"/>
<text x="563.8" y="563.35" font-size="4.3" fill="#222" text-anchor="middle" font-weight="normal" font-family="Liberation Sans" transform="rotate(-90 563.8 563.35)" >1720W</text>
<path d="M562 625.5 H547.3 Q548 640.15 562 640.15 M562 654.8 H547.3 Q548 640.15 562 640.15" fill="none" stroke="#111" stroke-width="1.1"/>
<text x="563.8" y="640.15" font-size="4.3" fill="#222" text-anchor="middle" font-weight="normal" font-family="Liberation Sans" transform="rotate(-90 563.8 640.15)" >1720W</text>
<line x1="576.4" y1="337" x2="576.4" y2="357.3" stroke="#1e1ec4" stroke-width="1.0" />
<path d="M574 357.3 H579 M574 339 L576.4 337 L579 339" stroke="#1e1ec4" stroke-width="0.9" fill="none"/>
<text x="572" y="345.8" font-size="6" fill="#1e1ec4" text-anchor="middle" font-family="Liberation Sans" transform="rotate(-90 572 345.8)" font-weight="bold">1230</text>
<text x="563.5" y="367.3" font-size="6" fill="#1e1ec4" text-anchor="middle" font-family="Liberation Sans" font-weight="bold" stroke="#1e1ec4" stroke-width="0.1" textLength="9" lengthAdjust="spacingAndGlyphs">240</text>
<path d="M558 370.5 H569 M559.5 368.8 L562 370.5 L559.5 372.2 Z M567.5 368.8 L565 370.5 L567.5 372.2 Z" fill="#1e1ec4" stroke="#1e1ec4" stroke-width="0.7"/>
<text x="589.5" y="365.1" font-size="5.4" fill="#1a1a1a" text-anchor="start" font-weight="normal" font-family="Liberation Sans" textLength="62.5" lengthAdjust="spacingAndGlyphs" stroke="#1a1a1a" stroke-width="0.25">90MM STRAPPING WALL</text>
<text x="589.5" y="371.2" font-size="5.4" fill="#1a1a1a" text-anchor="start" font-weight="normal" font-family="Liberation Sans" textLength="45.0" lengthAdjust="spacingAndGlyphs" stroke="#1a1a1a" stroke-width="0.25">INSULATION R2.4</text>
<text x="589.5" y="377.4" font-size="5.4" fill="#1a1a1a" text-anchor="start" font-weight="normal" font-family="Liberation Sans" textLength="59.5" lengthAdjust="spacingAndGlyphs" stroke="#1a1a1a" stroke-width="0.25">10MM PLASTERBOARD</text>
<polygon points="563.5,422.7 604.7,422.7 604.7,402 640,402 640,442.7 563.5,442.7" fill="#c9f6f8" stroke="#333" stroke-width="0.9"/>
<rect x="624.7" y="422" width="20" height="16.7" fill="#e6e65a" stroke="#333" stroke-width="0.9" />
<line x1="624.7" y1="442.7" x2="624.7" y2="484" stroke="#777" stroke-width="0.9" />
<text x="610.5" y="402.3" font-size="11.5" fill="#e0283c" text-anchor="start" font-family="Liberation Sans" font-weight="bold" textLength="30" lengthAdjust="spacingAndGlyphs">FFL: 3</text>
<circle cx="617.5" cy="405.5" r="0.8" fill="#e0283c"/>
<line x1="562" y1="453.3" x2="640" y2="453.3" stroke="#1e1ec4" stroke-width="1.0" />
<circle cx="563" cy="453.3" r="1.3" fill="#1e1ec4"/>
<text x="567.3" y="458.5" font-size="5.4" fill="#1a1a1a" text-anchor="start" font-weight="normal" font-family="Liberation Sans" textLength="66.7" lengthAdjust="spacingAndGlyphs" stroke="#1a1a1a" stroke-width="0.25">BLOCK WALL WITH PAINT</text>
<text x="567.3" y="464.5" font-size="5.4" fill="#1a1a1a" text-anchor="start" font-weight="normal" font-family="Liberation Sans" textLength="60.0" lengthAdjust="spacingAndGlyphs" stroke="#1a1a1a" stroke-width="0.25">OR PLASTER OR 45MM</text>
<text x="567.3" y="470.5" font-size="5.4" fill="#1a1a1a" text-anchor="start" font-weight="normal" font-family="Liberation Sans" textLength="44.0" lengthAdjust="spacingAndGlyphs" stroke="#1a1a1a" stroke-width="0.25">STRAPPING, R1.0</text>
<text x="567.3" y="476.5" font-size="5.4" fill="#1a1a1a" text-anchor="start" font-weight="normal" font-family="Liberation Sans" textLength="66.7" lengthAdjust="spacingAndGlyphs" stroke="#1a1a1a" stroke-width="0.25">ACOUSTIC INSULATION —</text>
<rect x="561.3" y="485" width="80" height="5" fill="#666" stroke="#000" stroke-width="1.3"/>
<line x1="562" y1="487.5" x2="640" y2="487.5" stroke="#222" stroke-width="0.8" stroke-dasharray="3 1" />
<line x1="562" y1="532" x2="640" y2="532" stroke="#1e1ec4" stroke-width="1.0" />
<circle cx="563" cy="532" r="1.3" fill="#1e1ec4"/>
<text x="606.5" y="534.5" font-size="11.5" fill="#e0283c" text-anchor="start" font-family="Liberation Sans" font-weight="bold" textLength="30" lengthAdjust="spacingAndGlyphs">FFL: 3</text>
<circle cx="613" cy="537" r="0.8" fill="#e0283c"/>
<rect x="565.5" y="552.2" width="80" height="20.8" fill="#c9f6f8" stroke="#333" stroke-width="0.9" />
<text x="571.5" y="559.8" font-size="5.4" fill="#1a1a1a" text-anchor="start" font-weight="normal" font-family="Liberation Sans" textLength="66.5" lengthAdjust="spacingAndGlyphs" stroke="#1a1a1a" stroke-width="0.25">BLOCK WALL WITH PAINT</text>
<text x="571.5" y="565.8" font-size="5.4" fill="#1a1a1a" text-anchor="start" font-weight="normal" font-family="Liberation Sans" textLength="60.0" lengthAdjust="spacingAndGlyphs" stroke="#1a1a1a" stroke-width="0.25">OR PLASTER OR 45MM</text>
<text x="571.5" y="571.6" font-size="5.4" fill="#1a1a1a" text-anchor="start" font-weight="normal" font-family="Liberation Sans" textLength="44.0" lengthAdjust="spacingAndGlyphs" stroke="#1a1a1a" stroke-width="0.25">STRAPPING, R1.0</text>
<text x="571.5" y="578.2" font-size="5.4" fill="#1a1a1a" text-anchor="start" font-weight="normal" font-family="Liberation Sans" textLength="62.5" lengthAdjust="spacingAndGlyphs" stroke="#1a1a1a" stroke-width="0.25">ACOUSTIC INSULATION</text>
<rect x="561.3" y="587" width="80" height="4.6" fill="#666" stroke="#000" stroke-width="1.3"/>
<line x1="562" y1="589.3" x2="640" y2="589.3" stroke="#222" stroke-width="0.8" stroke-dasharray="3 1" />
<line x1="562" y1="596" x2="640" y2="596" stroke="#888" stroke-width="0.9" />
<rect x="569.3" y="592.8" width="10.6" height="9.5" fill="#fff" stroke="#222" stroke-width="1.1" />
<rect x="584.4" y="592.8" width="10.6" height="9.5" fill="#fff" stroke="#222" stroke-width="1.1" />
<rect x="599.5" y="592.8" width="10.6" height="9.5" fill="#fff" stroke="#222" stroke-width="1.1" />
<rect x="614.5999999999999" y="592.8" width="10.6" height="9.5" fill="#fff" stroke="#222" stroke-width="1.1" />
<rect x="629.6999999999999" y="592.8" width="10.6" height="9.5" fill="#fff" stroke="#222" stroke-width="1.1" />
<line x1="562" y1="602.3" x2="640" y2="602.3" stroke="#333" stroke-width="0.8" />
<polygon points="563.5,630.8 581.5,630.8 581.5,608.7 640,608.7 640,651.3 563.5,651.3" fill="#c9f6f8" stroke="#333" stroke-width="0.9"/>
<rect x="601.5" y="629.5" width="17.3" height="21" fill="#e6e65a" stroke="#333" stroke-width="0.9" />
<text x="608.2" y="614.5" font-size="11.5" fill="#e0283c" text-anchor="start" font-family="Liberation Sans" font-weight="bold" textLength="30" lengthAdjust="spacingAndGlyphs">FFL: 3</text>
<circle cx="614" cy="618" r="0.8" fill="#e0283c"/>
<line x1="562" y1="638.8" x2="640" y2="638.8" stroke="#1e1ec4" stroke-width="1.0" />
<circle cx="563" cy="638.8" r="1.3" fill="#1e1ec4"/>
<path d="M618.8 651 H663.3 V637.8" fill="none" stroke="#777" stroke-width="0.9"/>
<text x="590.8" y="660.4" font-size="5.4" fill="#1a1a1a" text-anchor="start" font-weight="normal" font-family="Liberation Sans" textLength="62.5" lengthAdjust="spacingAndGlyphs" stroke="#1a1a1a" stroke-width="0.25">90MM STRAPPING WALL</text>
<text x="590.8" y="666.4" font-size="5.4" fill="#1a1a1a" text-anchor="start" font-weight="normal" font-family="Liberation Sans" textLength="44.7" lengthAdjust="spacingAndGlyphs" stroke="#1a1a1a" stroke-width="0.25">INSULATION R2.4</text>
<text x="590.8" y="672.4" font-size="5.4" fill="#1a1a1a" text-anchor="start" font-weight="normal" font-family="Liberation Sans" textLength="59.2" lengthAdjust="spacingAndGlyphs" stroke="#1a1a1a" stroke-width="0.25">10MM PLASTERBOARD</text>
<path d="M651 670.5 H655 L666 684" fill="none" stroke="#222" stroke-width="0.8"/>
<path d="M664 681 L667.5 685 L668 680.5 Z" fill="#000"/>
<line x1="562" y1="679.2" x2="790" y2="679.2" stroke="#888" stroke-width="0.9" />
<rect x="569.2" y="676.5" width="11" height="9.8" fill="#fff" stroke="#111" stroke-width="1.25" />
<rect x="584.5" y="676.5" width="11" height="9.8" fill="#fff" stroke="#111" stroke-width="1.25" />
<rect x="599.8000000000001" y="676.5" width="11" height="9.8" fill="#fff" stroke="#111" stroke-width="1.25" />
<rect x="615.1" y="676.5" width="11" height="9.8" fill="#fff" stroke="#111" stroke-width="1.25" />
<rect x="630.4000000000001" y="676.5" width="11" height="9.8" fill="#fff" stroke="#111" stroke-width="1.25" />
<rect x="645.7" y="676.5" width="11" height="9.8" fill="#fff" stroke="#111" stroke-width="1.25" />
<rect x="661.0" y="676.5" width="11" height="9.8" fill="#fff" stroke="#111" stroke-width="1.25" />
<rect x="676.3000000000001" y="676.5" width="11" height="9.8" fill="#fff" stroke="#111" stroke-width="1.25" />
<rect x="691.6" y="676.5" width="11" height="9.8" fill="#fff" stroke="#111" stroke-width="1.25" />
<rect x="706.9000000000001" y="676.5" width="11" height="9.8" fill="#fff" stroke="#111" stroke-width="1.25" />
<rect x="722.2" y="676.5" width="11" height="9.8" fill="#fff" stroke="#111" stroke-width="1.25" />
<rect x="737.5" y="676.5" width="11" height="9.8" fill="#fff" stroke="#111" stroke-width="1.25" />
<rect x="752.8000000000001" y="676.5" width="11" height="9.8" fill="#fff" stroke="#111" stroke-width="1.25" />
<rect x="768.1" y="676.5" width="11" height="9.8" fill="#fff" stroke="#111" stroke-width="1.25" />
<rect x="561.3" y="686.6" width="283" height="4" fill="#777" stroke="none"/>
<line x1="561.3" y1="687" x2="844.3" y2="687" stroke="#000" stroke-width="1.6" />
<line x1="561.3" y1="690.9" x2="844.3" y2="690.9" stroke="#555" stroke-width="0.9" />
<line x1="562" y1="688.9" x2="844" y2="688.9" stroke="#333" stroke-width="0.8" stroke-dasharray="3 1" />
<line x1="691.8" y1="637.8" x2="691.8" y2="676" stroke="#000" stroke-width="2.2" />
<rect x="685.5" y="677" width="13" height="8" fill="#fff" stroke="#333" stroke-width="0.8" />
<text x="692" y="683.5" font-size="5" fill="#222" text-anchor="middle" font-weight="normal" font-family="Liberation Sans" >MV</text>
<path d="M693 637.8 V651 H750 V637.8" fill="none" stroke="#777" stroke-width="0.9"/>
<rect x="756.7" y="637.8" width="83.3" height="8.9" fill="#8fc7bd" stroke="#222" stroke-width="1" />
<path d="M796 639 L798 641 L800 639 M826 639 L828 641 L830 639" stroke="#1e1ec4" stroke-width="1"/>
<rect x="782" y="649" width="8" height="12" fill="none" stroke="#333" stroke-width="0.9" />
<text x="786" y="655" font-size="4.5" fill="#222" text-anchor="middle" font-weight="normal" font-family="Liberation Sans" transform="rotate(-90 786 655)" >MB</text>
<path d="M792.6 646.5 H841 M803 646.5 V679.3 M792.6 679.3 H835 M792.6 646.5 V679.3" fill="none" stroke="#555" stroke-width="0.8"/>
<path d="M835 660 V686 H828 V660 Z" fill="none" stroke="#555" stroke-width="0.7"/>
<text x="816" y="654.5" font-size="5" fill="#222" text-anchor="middle" font-weight="normal" font-family="Liberation Sans" >750W</text>
<path d="M812 660 V663 Q820 663 822 658" fill="none" stroke="#222" stroke-width="0.8"/>
<circle cx="810.5" cy="646.5" r="1.1" fill="#000"/><circle cx="823.5" cy="646.5" r="1.1" fill="#000"/>
<text x="837.5" y="673" font-size="4.4" fill="#222" text-anchor="middle" font-weight="normal" font-family="Liberation Sans" transform="rotate(-90 837.5 673)" >1500H x 1200W</text>
<rect x="841.3" y="637.8" width="2.6" height="52" fill="#333" stroke="#000" stroke-width="0.7"/>
<rect x="844.6" y="664.9" width="9.9" height="21.7" fill="none" stroke="#555" stroke-width="0.8" />
<circle cx="849.3" cy="670" r="4" fill="none" stroke="#222" stroke-width="0.9"/>
<text x="849.5" y="682" font-size="3.8" fill="#222" text-anchor="middle" font-weight="normal" font-family="Liberation Sans" transform="rotate(-90 849.5 682)" >HWC</text>
<path d="M879.5 637.8 L895.9 669.5 L847 682" fill="none" stroke="#111" stroke-width="0.9"/>
<path d="M851 679 L846 682.5 L852 684 Z" fill="#000"/>
<text x="897.2" y="672.8" font-size="5.6" fill="#1a1a1a" text-anchor="start" font-weight="normal" font-family="Liberation Sans" textLength="66.8" lengthAdjust="spacingAndGlyphs" stroke="#1a1a1a" stroke-width="0.25">1.8M ABOVE GAS BOTTLE</text>
<line x1="865" y1="638" x2="865" y2="693" stroke="#1e1ec4" stroke-width="1.1" />
<path d="M862.5 648 L865 650.5 L867.5 648 M862.5 684 L865 686.5 L867.5 684 M862.5 688 L865 690.5 L867.5 688" fill="none" stroke="#1e1ec4" stroke-width="1"/>
<text x="861" y="647" font-size="5" fill="#1e1ec4" text-anchor="middle" font-family="Liberation Sans" transform="rotate(-90 861 647)" font-weight="bold" stroke="#1e1ec4" stroke-width="0.15">90</text>
<text x="861" y="666.5" font-size="5" fill="#1e1ec4" text-anchor="middle" font-family="Liberation Sans" transform="rotate(-90 861 666.5)" font-weight="bold" stroke="#1e1ec4" stroke-width="0.15">210</text>
<text x="861" y="688.5" font-size="5" fill="#1e1ec4" text-anchor="middle" font-family="Liberation Sans" transform="rotate(-90 861 688.5)" font-weight="bold" stroke="#1e1ec4" stroke-width="0.15">240</text>
<text x="844" y="696.5" font-size="6" fill="#1e1ec4" text-anchor="middle" font-family="Liberation Sans" font-weight="bold" stroke="#1e1ec4" stroke-width="0.15">70</text>
<path d="M841.5 701 L844 703 L846.5 701 Z" fill="#1e1ec4" stroke="#1e1ec4" stroke-width="1"/>
<polygon points="608.2 702.6 620.0 713.4 608.2 724.1999999999999" fill="#000"/>
<circle cx="608.2" cy="713.4" r="6.8" fill="#fff" stroke="#000" stroke-width="0.9"/>
<line x1="601.4000000000001" y1="713.4" x2="615.0" y2="713.4" stroke="#000" stroke-width="1.3" />
<text x="608.2" y="712.1" font-size="5.2" fill="#000" text-anchor="middle" font-weight="normal" font-family="Liberation Sans" stroke="#000" stroke-width="0.12">1</text>
<text x="608.2" y="719.0" font-size="5.2" fill="#000" text-anchor="middle" font-weight="normal" font-family="Liberation Sans" stroke="#000" stroke-width="0.12">403</text>
<line x1="562" y1="720" x2="1058.7" y2="720" stroke="#1e1ec4" stroke-width="1.2" />
<line x1="562" y1="735" x2="1058.7" y2="735" stroke="#1e1ec4" stroke-width="1.2" />
<polygon points="559.4,720 562.4,717.7 562,720 562.4,722.3" fill="#1e1ec4" stroke="#1e1ec4" stroke-width="0.9" stroke-linejoin="round"/>
<polygon points="840.6999999999999,720 843.6999999999999,717.7 843.3,720 843.6999999999999,722.3" fill="#1e1ec4" stroke="#1e1ec4" stroke-width="0.9" stroke-linejoin="round"/>
<polygon points="886.0,720 889.0,717.7 888.6,720 889.0,722.3" fill="#1e1ec4" stroke="#1e1ec4" stroke-width="0.9" stroke-linejoin="round"/>
<polygon points="1056.1000000000001,720 1059.1000000000001,717.7 1058.7,720 1059.1000000000001,722.3" fill="#1e1ec4" stroke="#1e1ec4" stroke-width="0.9" stroke-linejoin="round"/>
<polygon points="559.4,735 562.4,732.7 562,735 562.4,737.3" fill="#1e1ec4" stroke="#1e1ec4" stroke-width="0.9" stroke-linejoin="round"/>
<polygon points="1056.1000000000001,735 1059.1000000000001,732.7 1058.7,735 1059.1000000000001,737.3" fill="#1e1ec4" stroke="#1e1ec4" stroke-width="0.9" stroke-linejoin="round"/>
<text x="702.2" y="716.5" font-size="6.8" fill="#1e1ec4" text-anchor="middle" font-family="Liberation Sans" font-weight="bold" stroke="#1e1ec4" stroke-width="0.15" textLength="18" lengthAdjust="spacingAndGlyphs">16600</text>
<text x="865.6" y="716.5" font-size="6.8" fill="#1e1ec4" text-anchor="middle" font-family="Liberation Sans" font-weight="bold" stroke="#1e1ec4" stroke-width="0.15" textLength="15" lengthAdjust="spacingAndGlyphs">2650</text>
<text x="973.6" y="716.5" font-size="6.8" fill="#1e1ec4" text-anchor="middle" font-family="Liberation Sans" font-weight="bold" stroke="#1e1ec4" stroke-width="0.15" textLength="18" lengthAdjust="spacingAndGlyphs">10040</text>
<text x="810" y="732" font-size="6.8" fill="#1e1ec4" text-anchor="middle" font-family="Liberation Sans" font-weight="bold" stroke="#1e1ec4" stroke-width="0.15" textLength="18" lengthAdjust="spacingAndGlyphs">29290</text>
<line x1="561.6" y1="691" x2="561.6" y2="769.7" stroke="#777" stroke-width="0.9" stroke-dasharray="12 5 14 5 100" />
<line x1="843.3" y1="705" x2="843.3" y2="769.7" stroke="#777" stroke-width="0.9" />
<line x1="888.6" y1="638" x2="888.6" y2="769.7" stroke="#777" stroke-width="0.9" stroke-dasharray="30 4" />
<line x1="1058.7" y1="589" x2="1058.7" y2="769.7" stroke="#777" stroke-width="0.9" stroke-dasharray="10 5" />
<line x1="873" y1="691.2" x2="1074.4" y2="691.2" stroke="#666" stroke-width="0.9" stroke-dasharray="10 6" />
<line x1="1040" y1="589.3" x2="1074.3" y2="589.3" stroke="#777" stroke-width="0.9" />
<circle cx="561.6" cy="780" r="10.3" fill="#fff" stroke="#777" stroke-width="0.9"/>
<text x="561.6" y="784" font-size="10.5" fill="#777" text-anchor="middle" font-weight="normal" font-family="Liberation Sans" >D</text>
<circle cx="843.3" cy="780" r="10.3" fill="#fff" stroke="#777" stroke-width="0.9"/>
<text x="843.3" y="784" font-size="10.5" fill="#777" text-anchor="middle" font-weight="normal" font-family="Liberation Sans" >C</text>
<circle cx="888.2" cy="780" r="10.3" fill="#fff" stroke="#777" stroke-width="0.9"/>
<text x="888.2" y="784" font-size="10.5" fill="#777" text-anchor="middle" font-weight="normal" font-family="Liberation Sans" >B</text>
<circle cx="1058.7" cy="780.5" r="10.3" fill="#fff" stroke="#777" stroke-width="0.9"/>
<text x="1058.7" y="784.5" font-size="10.5" fill="#777" text-anchor="middle" font-weight="normal" font-family="Liberation Sans" >A</text>
<polygon points="683.2 769.3 695.6 756.9 708.0 769.3" fill="#000"/>
<circle cx="695.6" cy="769.3" r="7.4" fill="#fff" stroke="#000" stroke-width="0.9"/>
<text x="695.6" y="771.3" font-size="5.6" fill="#000" text-anchor="middle" font-weight="normal" font-family="Liberation Sans" stroke="#000" stroke-width="0.12">301</text>
<text x="695.6" y="759" font-size="5" fill="#000" text-anchor="middle" font-weight="normal" font-family="Liberation Sans" >2</text>
<polygon points="713.8000000000001 769.3 726.2 756.9 738.6 769.3" fill="#000"/>
<circle cx="726.2" cy="769.3" r="7.4" fill="#fff" stroke="#000" stroke-width="0.9"/>
<text x="726.2" y="771.3" font-size="5.6" fill="#000" text-anchor="middle" font-weight="normal" font-family="Liberation Sans" stroke="#000" stroke-width="0.12">508</text>
<text x="726.2" y="759" font-size="5" fill="#000" text-anchor="middle" font-weight="normal" font-family="Liberation Sans" >3</text>
<path d="M1040 460.2 A4.90 4.90 0 0 1 1047.20 460.20 A4.90 4.90 0 0 1 1054.40 460.20 A4.90 4.90 0 0 1 1061.60 460.20 A4.90 4.90 0 0 1 1068.80 460.20 A5.07 5.07 0 0 1 1068.80 467.66 A5.07 5.07 0 0 1 1068.80 475.12 A5.07 5.07 0 0 1 1068.80 482.57 A5.07 5.07 0 0 1 1068.80 490.03 A5.07 5.07 0 0 1 1068.80 497.49 A5.07 5.07 0 0 1 1068.80 504.95 A5.07 5.07 0 0 1 1068.80 512.40 A5.07 5.07 0 0 1 1068.80 519.86 A5.07 5.07 0 0 1 1068.80 527.32 A5.07 5.07 0 0 1 1068.80 534.78 A5.07 5.07 0 0 1 1068.80 542.23 A5.07 5.07 0 0 1 1068.80 549.69 A5.07 5.07 0 0 1 1068.80 557.15 A5.07 5.07 0 0 1 1068.80 564.61 A5.07 5.07 0 0 1 1068.80 572.06 A5.07 5.07 0 0 1 1068.80 579.52 A5.07 5.07 0 0 1 1068.80 586.98 A5.07 5.07 0 0 1 1068.80 594.44 A5.07 5.07 0 0 1 1068.80 601.89 A5.07 5.07 0 0 1 1068.80 609.35 A5.07 5.07 0 0 1 1068.80 616.81 A5.07 5.07 0 0 1 1068.80 624.27 A5.07 5.07 0 0 1 1068.80 631.72 A5.07 5.07 0 0 1 1068.80 639.18 A5.07 5.07 0 0 1 1068.80 646.64 A5.07 5.07 0 0 1 1068.80 654.10 A5.07 5.07 0 0 1 1068.80 661.55 A5.07 5.07 0 0 1 1068.80 669.01 A5.07 5.07 0 0 1 1068.80 676.47 A5.07 5.07 0 0 1 1068.80 683.93 A5.07 5.07 0 0 1 1068.80 691.38 A5.07 5.07 0 0 1 1068.80 698.84 A5.07 5.07 0 0 1 1068.80 706.30 A5.11 5.11 0 0 1 1061.29 706.30 A5.11 5.11 0 0 1 1053.78 706.30 A5.11 5.11 0 0 1 1046.28 706.30 A5.11 5.11 0 0 1 1038.77 706.30 A5.11 5.11 0 0 1 1031.26 706.30 A5.11 5.11 0 0 1 1023.75 706.30 A5.11 5.11 0 0 1 1016.24 706.30 A5.11 5.11 0 0 1 1008.74 706.30 A5.11 5.11 0 0 1 1001.23 706.30 A5.11 5.11 0 0 1 993.72 706.30 A5.11 5.11 0 0 1 986.21 706.30 A5.11 5.11 0 0 1 978.70 706.30 A5.11 5.11 0 0 1 971.19 706.30 A5.11 5.11 0 0 1 963.69 706.30 A5.11 5.11 0 0 1 956.18 706.30 A5.11 5.11 0 0 1 948.67 706.30 A5.11 5.11 0 0 1 941.16 706.30 A5.11 5.11 0 0 1 933.65 706.30 A5.11 5.11 0 0 1 926.15 706.30 A5.11 5.11 0 0 1 918.64 706.30 A5.11 5.11 0 0 1 911.13 706.30 A5.11 5.11 0 0 1 903.62 706.30 A5.11 5.11 0 0 1 896.11 706.30 A5.11 5.11 0 0 1 888.61 706.30 A5.11 5.11 0 0 1 881.10 706.30 A5.11 5.11 0 0 1 873.59 706.30 A5.11 5.11 0 0 1 866.08 706.30 A5.11 5.11 0 0 1 858.57 706.30 A5.11 5.11 0 0 1 851.06 706.30 A5.11 5.11 0 0 1 843.56 706.30 A5.11 5.11 0 0 1 836.05 706.30 A5.11 5.11 0 0 1 828.54 706.30 A5.11 5.11 0 0 1 821.03 706.30 A5.11 5.11 0 0 1 813.52 706.30 A5.11 5.11 0 0 1 806.02 706.30 A5.11 5.11 0 0 1 798.51 706.30 A5.11 5.11 0 0 1 791.00 706.30 A5.24 5.24 0 0 1 791.00 698.60 A5.24 5.24 0 0 1 791.00 690.90 A5.24 5.24 0 0 1 791.00 683.20 A5.24 5.24 0 0 1 791.00 675.50 A5.24 5.24 0 0 1 791.00 667.80 A5.24 5.24 0 0 1 791.00 660.10 A5.24 5.24 0 0 1 791.00 652.40 A5.24 5.24 0 0 1 791.00 644.70 A5.24 5.24 0 0 1 791.00 637.00" fill="none" stroke="#e0283c" stroke-width="1.15"/>
<line x1="985.1" y1="706" x2="982.7" y2="732.5" stroke="#222" stroke-width="0.9" />
<text x="971.5" y="740.8" font-size="9" fill="#222" text-anchor="start" font-weight="normal" font-family="Liberation Sans" textLength="22.5" lengthAdjust="spacingAndGlyphs" stroke="#222" stroke-width="0.1">Rev.1</text>
<circle cx="388.4" cy="823.3" r="13" fill="none" stroke="#222" stroke-width="1.1"/>
<line x1="375.4" y1="823.3" x2="401.4" y2="823.3" stroke="#222" stroke-width="1.1" />
<text x="388.4" y="821" font-size="8.5" fill="#222" text-anchor="middle" font-weight="normal" font-family="Liberation Sans" >1</text>
<text x="405.7" y="820.8" font-size="11" fill="#1a1a1a" text-anchor="start" font-weight="normal" font-family="Liberation Sans" textLength="140.1" lengthAdjust="spacingAndGlyphs" stroke="#1a1a1a" stroke-width="0.15">201 GROUND FLOOR PLAN</text>
<text x="405.7" y="834.8" font-size="11" fill="#1a1a1a" text-anchor="start" font-weight="normal" font-family="Liberation Sans" textLength="33.3" lengthAdjust="spacingAndGlyphs" stroke="#1a1a1a" stroke-width="0.15">1 : 150</text>
<line x1="1059.2" y1="443.2" x2="1059.2" y2="589.4" stroke="#777" stroke-width="0.9" />
<path d="M1040 442.3 L1073.8 463.6 L1058.3 486 H1086.6" fill="none" stroke="#1e1ec4" stroke-width="1.1"/>
<path d="M1071 461 L1076 465" stroke="#1e1ec4" stroke-width="1.3"/>
<line x1="1085.7" y1="486" x2="1085.7" y2="545.1" stroke="#1e1ec4" stroke-width="1.1" />
<polygon points="1085.7,483.4 1083.4,486.4 1085.7,486 1088.0,486.4" fill="#1e1ec4" stroke="#1e1ec4" stroke-width="0.9" stroke-linejoin="round"/>
<polygon points="1085.7,494.9 1083.4,497.9 1085.7,497.5 1088.0,497.9" fill="#1e1ec4" stroke="#1e1ec4" stroke-width="0.9" stroke-linejoin="round"/>
<polygon points="1085.7,542.5 1083.4,545.5 1085.7,545.1 1088.0,545.5" fill="#1e1ec4" stroke="#1e1ec4" stroke-width="0.9" stroke-linejoin="round"/>
<path d="M1079 488.5 Q1083 487 1083 491.5" stroke="#1e1ec4" stroke-width="0.9" fill="none"/>
<text x="1083" y="475.3" font-size="6.5" fill="#1e1ec4" text-anchor="middle" font-family="Liberation Sans" transform="rotate(-90 1083 475.3)" font-weight="bold" stroke="#1e1ec4" stroke-width="0.15">550</text>
<text x="1083" y="497" font-size="6.5" fill="#1e1ec4" text-anchor="middle" font-family="Liberation Sans" transform="rotate(-90 1083 497)" font-weight="bold" stroke="#1e1ec4" stroke-width="0.15">90</text>
<text x="1083" y="521.5" font-size="6.5" fill="#1e1ec4" text-anchor="middle" font-family="Liberation Sans" transform="rotate(-90 1083 521.5)" font-weight="bold" stroke="#1e1ec4" stroke-width="0.15">2700</text>
<path d="M1040 476.2 H1052 L1057.4 482 V543.2 H1040" fill="none" stroke="#555" stroke-width="0.9"/>
<path d="M1040 479 H1051 L1055 483.5 V541 H1040" fill="none" stroke="#777" stroke-width="0.7"/>
<line x1="1040" y1="494.2" x2="1073" y2="516.4" stroke="#000" stroke-width="2.2" />
<line x1="1040" y1="470" x2="1062" y2="478" stroke="#000" stroke-width="1.6" />
<text x="1054" y="479" font-size="5" fill="#222" text-anchor="start" font-weight="normal" font-family="Liberation Sans" transform="rotate(22 1054 479)" >x 600W</text>
<rect x="1044.5" y="486" width="8.5" height="8.5" fill="none" stroke="#222" stroke-width="0.9" />
<text x="1048.8" y="492.6" font-size="6" fill="#222" text-anchor="middle" font-weight="normal" font-family="Liberation Sans" >c</text>
<text x="1066.5" y="512" font-size="4.6" fill="#222" text-anchor="middle" font-weight="normal" font-family="Liberation Sans" transform="rotate(-90 1066.5 512)" >1200H x 600W</text>
<path d="M1061 498 V524" stroke="#222" stroke-width="0.8"/>
<line x1="1040" y1="513" x2="1096" y2="513" stroke="#333" stroke-width="0.9" stroke-dasharray="2 2" />
<circle cx="1044.2" cy="553.6" r="6" fill="none" stroke="#e0283c" stroke-width="0.9"/><circle cx="1051" cy="553" r="4" fill="none" stroke="#444" stroke-width="0.8"/>
<path d="M1040 546 H1058 V560 H1040" fill="none" stroke="#555" stroke-width="0.8"/>
<line x1="1040" y1="578.1" x2="1058.3" y2="578.1" stroke="#1e1ec4" stroke-width="1.1" />
<polygon points="1055.7,578.1 1058.7,575.8000000000001 1058.3,578.1 1058.7,580.4" fill="#1e1ec4" stroke="#1e1ec4" stroke-width="0.9" stroke-linejoin="round"/>
<polygon points="1096.2 513.1 1108 501.3 1119.8 513.1" fill="#000"/>
<circle cx="1108" cy="513.1" r="6.8" fill="#fff" stroke="#000" stroke-width="0.9"/>
<line x1="1101.2" y1="513.1" x2="1114.8" y2="513.1" stroke="#000" stroke-width="1.3" />
<text x="1108" y="511.8" font-size="5.2" fill="#000" text-anchor="middle" font-weight="normal" font-family="Liberation Sans" stroke="#000" stroke-width="0.12">1</text>
<text x="1108" y="518.7" font-size="5.2" fill="#000" text-anchor="middle" font-weight="normal" font-family="Liberation Sans" stroke="#000" stroke-width="0.12">401</text>
<circle cx="1135" cy="545.1" r="10" fill="#fff" stroke="#777" stroke-width="0.9"/>
<text x="1135" y="549.1" font-size="10.5" fill="#777" text-anchor="middle" font-weight="normal" font-family="Liberation Sans" >5</text>
<line x1="1077.2" y1="545.1" x2="1091.5" y2="545.1" stroke="#777" stroke-width="0.9" />
<line x1="1094" y1="545.1" x2="1125" y2="545.1" stroke="#777" stroke-width="0.9" />
<line x1="1116.4" y1="545.1" x2="1116.4" y2="590.2" stroke="#1e1ec4" stroke-width="1.1" />
<polygon points="1116.4,542.5 1114.1000000000001,545.5 1116.4,545.1 1118.7,545.5" fill="#1e1ec4" stroke="#1e1ec4" stroke-width="0.9" stroke-linejoin="round"/>
<polygon points="1116.4,587.6 1114.1000000000001,590.6 1116.4,590.2 1118.7,590.6" fill="#1e1ec4" stroke="#1e1ec4" stroke-width="0.9" stroke-linejoin="round"/>
<text x="1112.5" y="567.6" font-size="6.5" fill="#1e1ec4" text-anchor="middle" font-family="Liberation Sans" transform="rotate(-90 1112.5 567.6)" font-weight="bold" stroke="#1e1ec4" stroke-width="0.15">2600</text>
<polygon points="1100 599.2 1087.6 610.6 1100 622.0" fill="#000"/>
<circle cx="1100" cy="610.6" r="7.4" fill="#fff" stroke="#000" stroke-width="0.9"/>
<text x="1100" y="612.6" font-size="5.6" fill="#000" text-anchor="middle" font-weight="normal" font-family="Liberation Sans" stroke="#000" stroke-width="0.12">302</text>
<text x="1084.5" y="613" font-size="5.5" fill="#000" text-anchor="start" font-weight="normal" font-family="Liberation Sans" >1</text>
<polygon points="1103.7 629.7 1091.3 641.1 1103.7 652.5" fill="#000"/>
<circle cx="1103.7" cy="641.1" r="7.4" fill="#fff" stroke="#000" stroke-width="0.9"/>
<text x="1103.7" y="643.1" font-size="5.6" fill="#000" text-anchor="middle" font-weight="normal" font-family="Liberation Sans" stroke="#000" stroke-width="0.12">508</text>
<text x="1088.5" y="643.5" font-size="5.5" fill="#000" text-anchor="start" font-weight="normal" font-family="Liberation Sans" >1</text>
<line x1="1169.3" y1="580" x2="1180.7" y2="601.7" stroke="#222" stroke-width="0.9" />
<text x="1145.5" y="582.5" font-size="9" fill="#222" text-anchor="start" font-weight="normal" font-family="Liberation Sans" textLength="22.5" lengthAdjust="spacingAndGlyphs" stroke="#222" stroke-width="0.1">Rev.1</text>
<path d="M1025 135 A5.19 5.19 0 0 1 1032.63 135.00 A5.19 5.19 0 0 1 1040.26 135.00 A5.19 5.19 0 0 1 1047.90 135.00 A5.19 5.19 0 0 1 1055.53 135.00 A5.19 5.19 0 0 1 1063.16 135.00 A5.19 5.19 0 0 1 1070.79 135.00 A5.19 5.19 0 0 1 1078.42 135.00 A5.19 5.19 0 0 1 1086.05 135.00 A5.19 5.19 0 0 1 1093.69 135.00 A5.19 5.19 0 0 1 1101.32 135.00 A5.19 5.19 0 0 1 1108.95 135.00 A5.19 5.19 0 0 1 1116.58 135.00 A5.19 5.19 0 0 1 1124.21 135.00 A5.19 5.19 0 0 1 1131.85 135.00 A5.19 5.19 0 0 1 1139.48 135.00 A5.19 5.19 0 0 1 1147.11 135.00 A5.19 5.19 0 0 1 1154.74 135.00 A5.19 5.19 0 0 1 1162.37 135.00 A5.19 5.19 0 0 1 1170.00 135.00 A5.19 5.19 0 0 1 1177.64 135.00 A5.19 5.19 0 0 1 1185.27 135.00 A5.19 5.19 0 0 1 1192.90 135.00 A5.14 5.14 0 0 1 1192.90 142.56 A5.14 5.14 0 0 1 1192.90 150.12 A5.14 5.14 0 0 1 1192.90 157.69 A5.14 5.14 0 0 1 1192.90 165.25 A5.14 5.14 0 0 1 1192.90 172.81 A5.14 5.14 0 0 1 1192.90 180.38 A5.14 5.14 0 0 1 1192.90 187.94 A5.14 5.14 0 0 1 1192.90 195.50 A5.14 5.14 0 0 1 1192.90 203.06 A5.14 5.14 0 0 1 1192.90 210.62 A5.14 5.14 0 0 1 1192.90 218.19 A5.14 5.14 0 0 1 1192.90 225.75 A5.14 5.14 0 0 1 1192.90 233.31 A5.14 5.14 0 0 1 1192.90 240.88 A5.14 5.14 0 0 1 1192.90 248.44 A5.14 5.14 0 0 1 1192.90 256.00 A5.14 5.14 0 0 1 1192.90 263.56 A5.14 5.14 0 0 1 1192.90 271.12 A5.14 5.14 0 0 1 1192.90 278.69 A5.14 5.14 0 0 1 1192.90 286.25 A5.14 5.14 0 0 1 1192.90 293.81 A5.14 5.14 0 0 1 1192.90 301.38 A5.14 5.14 0 0 1 1192.90 308.94 A5.14 5.14 0 0 1 1192.90 316.50 A5.14 5.14 0 0 1 1192.90 324.06 A5.14 5.14 0 0 1 1192.90 331.62 A5.14 5.14 0 0 1 1192.90 339.19 A5.14 5.14 0 0 1 1192.90 346.75 A5.14 5.14 0 0 1 1192.90 354.31 A5.14 5.14 0 0 1 1192.90 361.88 A5.14 5.14 0 0 1 1192.90 369.44 A5.14 5.14 0 0 1 1192.90 377.00 A5.14 5.14 0 0 1 1192.90 384.56 A5.14 5.14 0 0 1 1192.90 392.12 A5.14 5.14 0 0 1 1192.90 399.69 A5.14 5.14 0 0 1 1192.90 407.25 A5.14 5.14 0 0 1 1192.90 414.81 A5.14 5.14 0 0 1 1192.90 422.38 A5.14 5.14 0 0 1 1192.90 429.94 A5.14 5.14 0 0 1 1192.90 437.50 A5.19 5.19 0 0 1 1185.27 437.50 A5.19 5.19 0 0 1 1177.64 437.50 A5.19 5.19 0 0 1 1170.00 437.50 A5.19 5.19 0 0 1 1162.37 437.50 A5.19 5.19 0 0 1 1154.74 437.50 A5.19 5.19 0 0 1 1147.11 437.50 A5.19 5.19 0 0 1 1139.48 437.50 A5.19 5.19 0 0 1 1131.85 437.50 A5.19 5.19 0 0 1 1124.21 437.50 A5.19 5.19 0 0 1 1116.58 437.50 A5.19 5.19 0 0 1 1108.95 437.50 A5.19 5.19 0 0 1 1101.32 437.50 A5.19 5.19 0 0 1 1093.69 437.50 A5.19 5.19 0 0 1 1086.05 437.50 A5.19 5.19 0 0 1 1078.42 437.50 A5.19 5.19 0 0 1 1070.79 437.50 A5.19 5.19 0 0 1 1063.16 437.50 A5.19 5.19 0 0 1 1055.53 437.50 A5.19 5.19 0 0 1 1047.90 437.50 A5.19 5.19 0 0 1 1040.26 437.50 A5.19 5.19 0 0 1 1032.63 437.50 A5.19 5.19 0 0 1 1025.00 437.50 A5.14 5.14 0 0 1 1025.00 429.94 A5.14 5.14 0 0 1 1025.00 422.38 A5.14 5.14 0 0 1 1025.00 414.81 A5.14 5.14 0 0 1 1025.00 407.25 A5.14 5.14 0 0 1 1025.00 399.69 A5.14 5.14 0 0 1 1025.00 392.12 A5.14 5.14 0 0 1 1025.00 384.56 A5.14 5.14 0 0 1 1025.00 377.00 A5.14 5.14 0 0 1 1025.00 369.44 A5.14 5.14 0 0 1 1025.00 361.88 A5.14 5.14 0 0 1 1025.00 354.31 A5.14 5.14 0 0 1 1025.00 346.75 A5.14 5.14 0 0 1 1025.00 339.19 A5.14 5.14 0 0 1 1025.00 331.62 A5.14 5.14 0 0 1 1025.00 324.06 A5.14 5.14 0 0 1 1025.00 316.50 A5.14 5.14 0 0 1 1025.00 308.94 A5.14 5.14 0 0 1 1025.00 301.38 A5.14 5.14 0 0 1 1025.00 293.81 A5.14 5.14 0 0 1 1025.00 286.25 A5.14 5.14 0 0 1 1025.00 278.69 A5.14 5.14 0 0 1 1025.00 271.12 A5.14 5.14 0 0 1 1025.00 263.56 A5.14 5.14 0 0 1 1025.00 256.00 A5.14 5.14 0 0 1 1025.00 248.44 A5.14 5.14 0 0 1 1025.00 240.88 A5.14 5.14 0 0 1 1025.00 233.31 A5.14 5.14 0 0 1 1025.00 225.75 A5.14 5.14 0 0 1 1025.00 218.19 A5.14 5.14 0 0 1 1025.00 210.62 A5.14 5.14 0 0 1 1025.00 203.06 A5.14 5.14 0 0 1 1025.00 195.50 A5.14 5.14 0 0 1 1025.00 187.94 A5.14 5.14 0 0 1 1025.00 180.38 A5.14 5.14 0 0 1 1025.00 172.81 A5.14 5.14 0 0 1 1025.00 165.25 A5.14 5.14 0 0 1 1025.00 157.69 A5.14 5.14 0 0 1 1025.00 150.12 A5.14 5.14 0 0 1 1025.00 142.56 A5.14 5.14 0 0 1 1025.00 135.00Z" fill="none" stroke="#e0283c" stroke-width="1.15"/>
<line x1="1008" y1="189.8" x2="1025" y2="191.1" stroke="#222" stroke-width="0.9" />
<text x="982.5" y="192.5" font-size="9" fill="#222" text-anchor="start" font-weight="normal" font-family="Liberation Sans" textLength="23.0" lengthAdjust="spacingAndGlyphs" stroke="#222" stroke-width="0.1">Rev.1</text>
<line x1="1048.9" y1="156.3" x2="1091.6" y2="156.3" stroke="#000" stroke-width="2.6" />
<text x="1098" y="158.7" font-size="6.6" fill="#1a1a1a" text-anchor="start" font-weight="normal" font-family="Liberation Sans" textLength="69.3" lengthAdjust="spacingAndGlyphs" stroke="#1a1a1a" stroke-width="0.15">Vent size:  1200 mm²</text>
<text x="1048.9" y="175.4" font-size="5.9" fill="#1a1a1a" text-anchor="start" font-weight="normal" font-family="Liberation Sans" textLength="102.0" lengthAdjust="spacingAndGlyphs" stroke="#1a1a1a" stroke-width="0.12">A mechanical ventilation system shall:</text>
<text x="1048.9" y="183.3" font-size="5.9" fill="#1a1a1a" text-anchor="start" font-weight="normal" font-family="Liberation Sans" textLength="114.5" lengthAdjust="spacingAndGlyphs" stroke="#1a1a1a" stroke-width="0.12">a) For each kW of gas consumption (of all</text>
<text x="1048.9" y="190.1" font-size="5.9" fill="#1a1a1a" text-anchor="start" font-weight="normal" font-family="Liberation Sans" textLength="123.4" lengthAdjust="spacingAndGlyphs" stroke="#1a1a1a" stroke-width="0.12">appliances in the plant room) provide outdoor</text>
<text x="1048.9" y="197.1" font-size="5.9" fill="#1a1a1a" text-anchor="start" font-weight="normal" font-family="Liberation Sans" textLength="43.4" lengthAdjust="spacingAndGlyphs" stroke="#1a1a1a" stroke-width="0.12">air at the rate of:</text>
<text x="1048.9" y="204.1" font-size="5.9" fill="#1a1a1a" text-anchor="start" font-weight="normal" font-family="Liberation Sans" textLength="110.2" lengthAdjust="spacingAndGlyphs" stroke="#1a1a1a" stroke-width="0.12">i) 3.6 m3/h for forced or induced draught</text>
<text x="1048.9" y="211.1" font-size="5.9" fill="#1a1a1a" text-anchor="start" font-weight="normal" font-family="Liberation Sans" textLength="42.7" lengthAdjust="spacingAndGlyphs" stroke="#1a1a1a" stroke-width="0.12">appliances, and</text>
<text x="1048.9" y="218.1" font-size="5.9" fill="#1a1a1a" text-anchor="start" font-weight="normal" font-family="Liberation Sans" textLength="117.3" lengthAdjust="spacingAndGlyphs" stroke="#1a1a1a" stroke-width="0.12">ii) 7.2 m3/h for appliances with atmospheric</text>
<text x="1048.9" y="225.2" font-size="5.9" fill="#1a1a1a" text-anchor="start" font-weight="normal" font-family="Liberation Sans" textLength="32.0" lengthAdjust="spacingAndGlyphs" stroke="#1a1a1a" stroke-width="0.12">burners, and</text>
<text x="1048.9" y="232.3" font-size="5.9" fill="#1a1a1a" text-anchor="start" font-weight="normal" font-family="Liberation Sans" textLength="119.8" lengthAdjust="spacingAndGlyphs" stroke="#1a1a1a" stroke-width="0.12">b) Remove exhaust air from the room either:</text>
<text x="1048.9" y="239.0" font-size="5.9" fill="#1a1a1a" text-anchor="start" font-weight="normal" font-family="Liberation Sans" textLength="110.2" lengthAdjust="spacingAndGlyphs" stroke="#1a1a1a" stroke-width="0.12">i) mechanically at one third the inlet rate, or</text>
<text x="1048.9" y="245.9" font-size="5.9" fill="#1a1a1a" text-anchor="start" font-weight="normal" font-family="Liberation Sans" textLength="116.6" lengthAdjust="spacingAndGlyphs" stroke="#1a1a1a" stroke-width="0.12">ii) naturally via high-level openings having a</text>
<text x="1048.9" y="253.5" font-size="5.9" fill="#1a1a1a" text-anchor="start" font-weight="normal" font-family="Liberation Sans" textLength="106.7" lengthAdjust="spacingAndGlyphs" stroke="#1a1a1a" stroke-width="0.12">free ventilation area of no less than 600</text>
<text x="1048.9" y="260.5" font-size="5.9" fill="#1a1a1a" text-anchor="start" font-weight="normal" font-family="Liberation Sans" textLength="12.4" lengthAdjust="spacingAndGlyphs" stroke="#1a1a1a" stroke-width="0.12">mm2</text>
<text x="1051" y="267.6" font-size="5.9" fill="#1a1a1a" text-anchor="start" font-weight="normal" font-family="Liberation Sans" textLength="96.7" lengthAdjust="spacingAndGlyphs" stroke="#1a1a1a" stroke-width="0.12">per kW of total gas consumption for</text>
<text x="1048.9" y="274.7" font-size="5.9" fill="#1a1a1a" text-anchor="start" font-weight="normal" font-family="Liberation Sans" textLength="70.0" lengthAdjust="spacingAndGlyphs" stroke="#1a1a1a" stroke-width="0.12">all appliances in the room.</text>
<text x="1048.9" y="287.4" font-size="5.9" fill="#1a1a1a" text-anchor="start" font-weight="normal" font-family="Liberation Sans" textLength="112.7" lengthAdjust="spacingAndGlyphs" stroke="#1a1a1a" stroke-width="0.12">FRESH AIR VENTILATION SHOULD BE</text>
<text x="1048.9" y="294.5" font-size="5.9" fill="#1a1a1a" text-anchor="start" font-weight="normal" font-family="Liberation Sans" textLength="76.4" lengthAdjust="spacingAndGlyphs" stroke="#1a1a1a" stroke-width="0.12">INSTALLED IN EACH UNIT</text>
<text x="1048.9" y="332.6" font-size="5.9" fill="#1a1a1a" text-anchor="start" font-weight="normal" font-family="Liberation Sans" textLength="120.9" lengthAdjust="spacingAndGlyphs" stroke="#1a1a1a" stroke-width="0.12">SPACES FOR FOOD PREPARATION AND</text>
<text x="1048.9" y="339.7" font-size="5.9" fill="#1a1a1a" text-anchor="start" font-weight="normal" font-family="Liberation Sans" textLength="99.5" lengthAdjust="spacingAndGlyphs" stroke="#1a1a1a" stroke-width="0.12">UTENSIL WASHING SHALL HAVE:</text>
<text x="1048.9" y="346.8" font-size="5.9" fill="#1a1a1a" text-anchor="start" font-weight="normal" font-family="Liberation Sans" textLength="137.6" lengthAdjust="spacingAndGlyphs" stroke="#1a1a1a" stroke-width="0.12">(A) INTERIOR LININGS AND WORK SURFACES</text>
<text x="1048.9" y="353.7" font-size="5.9" fill="#1a1a1a" text-anchor="start" font-weight="normal" font-family="Liberation Sans" textLength="108.4" lengthAdjust="spacingAndGlyphs" stroke="#1a1a1a" stroke-width="0.12">SHALL BE IMPERVIOUS AND EASILY</text>
<text x="1048.9" y="360.7" font-size="5.9" fill="#1a1a1a" text-anchor="start" font-weight="normal" font-family="Liberation Sans" textLength="30.2" lengthAdjust="spacingAndGlyphs" stroke="#1a1a1a" stroke-width="0.12">CLEANED,</text>
<text x="1048.9" y="367.8" font-size="5.9" fill="#1a1a1a" text-anchor="start" font-weight="normal" font-family="Liberation Sans" textLength="136.9" lengthAdjust="spacingAndGlyphs" stroke="#1a1a1a" stroke-width="0.12">(B) ALL BUILDING ELEMENTS CONSTRUCTED</text>
<text x="1048.9" y="375.4" font-size="5.9" fill="#1a1a1a" text-anchor="start" font-weight="normal" font-family="Liberation Sans" textLength="128.7" lengthAdjust="spacingAndGlyphs" stroke="#1a1a1a" stroke-width="0.12">WITH MATERIALS WHICH ARE FREE FROM</text>
<text x="1048.9" y="382.7" font-size="5.9" fill="#1a1a1a" text-anchor="start" font-weight="normal" font-family="Liberation Sans" textLength="129.8" lengthAdjust="spacingAndGlyphs" stroke="#1a1a1a" stroke-width="0.12">HAZARDOUS SUBSTANCES WHICH COULD</text>
<text x="1048.9" y="389.7" font-size="5.9" fill="#1a1a1a" text-anchor="start" font-weight="normal" font-family="Liberation Sans" textLength="130.8" lengthAdjust="spacingAndGlyphs" stroke="#1a1a1a" stroke-width="0.12">CAUSE CONTAMINATION TO THE BUILDING</text>
<text x="1048.9" y="396.8" font-size="5.9" fill="#1a1a1a" text-anchor="start" font-weight="normal" font-family="Liberation Sans" textLength="51.5" lengthAdjust="spacingAndGlyphs" stroke="#1a1a1a" stroke-width="0.12">CONTENTS, AND</text>
<text x="1048.9" y="403.7" font-size="5.9" fill="#1a1a1a" text-anchor="start" font-weight="normal" font-family="Liberation Sans" textLength="137.6" lengthAdjust="spacingAndGlyphs" stroke="#1a1a1a" stroke-width="0.12">(C) EXPOSED BUILDING ELEMENTS LOCATED</text>
<text x="1048.9" y="410.8" font-size="5.9" fill="#1a1a1a" text-anchor="start" font-weight="normal" font-family="Liberation Sans" textLength="137.6" lengthAdjust="spacingAndGlyphs" stroke="#1a1a1a" stroke-width="0.12">AND SHAPED TO AVOID THE ACCUMULATION</text>
<text x="1048.9" y="417.8" font-size="5.9" fill="#1a1a1a" text-anchor="start" font-weight="normal" font-family="Liberation Sans" textLength="24.9" lengthAdjust="spacingAndGlyphs" stroke="#1a1a1a" stroke-width="0.12">OF DIRT.</text>
<text x="1048.9" y="426.8" font-size="5.9" fill="#1a1a1a" text-anchor="start" font-weight="normal" font-family="Liberation Sans" textLength="89.7" lengthAdjust="spacingAndGlyphs" stroke="#1a1a1a" stroke-width="0.12">ANTI SLIP TILE TO BE USED IN</text>
<text x="1048.9" y="434.1" font-size="5.9" fill="#1a1a1a" text-anchor="start" font-weight="normal" font-family="Liberation Sans" textLength="63.5" lengthAdjust="spacingAndGlyphs" stroke="#1a1a1a" stroke-width="0.12">COMMERCIAL KITCHENS</text>
<rect x="1046" y="303.1" width="11.8" height="8.9" fill="none" stroke="#222" stroke-width="0.8" />
<text x="1051.9" y="310" font-size="6" fill="#222" text-anchor="middle" font-weight="normal" font-family="Liberation Sans" >GT</text>
<text x="1061.3" y="309.3" font-size="5.9" fill="#1a1a1a" text-anchor="start" font-weight="normal" font-family="Liberation Sans" textLength="117.4" lengthAdjust="spacingAndGlyphs" stroke="#1a1a1a" stroke-width="0.12">GREASE TRAP SHOULD BE REQUIRED</text>
<text x="1061.3" y="316.6" font-size="5.9" fill="#1a1a1a" text-anchor="start" font-weight="normal" font-family="Liberation Sans" textLength="114.5" lengthAdjust="spacingAndGlyphs" stroke="#1a1a1a" stroke-width="0.12">FOR THESE COMMERCIAL KITCHENS.</text>
<line x1="1058.5" y1="318" x2="1058.5" y2="440" stroke="#777" stroke-width="0.8" />
<text x="1208.9" y="170.7" font-size="5.8" fill="#1a1a1a" text-anchor="start" font-weight="bold" font-family="Liberation Sans" textLength="31.9" lengthAdjust="spacingAndGlyphs" >LEGENDS:</text>
<text x="1208.9" y="186.3" font-size="5.8" fill="#1a1a1a" text-anchor="start" font-weight="bold" font-family="Liberation Sans" textLength="11.1" lengthAdjust="spacingAndGlyphs" >FFL</text>
<text x="1249.7" y="186.3" font-size="5.8" fill="#1a1a1a" text-anchor="start" font-weight="normal" font-family="Liberation Sans" textLength="73.6" lengthAdjust="spacingAndGlyphs" stroke="#1a1a1a" stroke-width="0.12">FINIHSED FLOOR LEVEL</text>
<text x="1208.9" y="201.3" font-size="5.8" fill="#1a1a1a" text-anchor="start" font-weight="bold" font-family="Liberation Sans" textLength="18.0" lengthAdjust="spacingAndGlyphs" >W0-01</text>
<text x="1249.7" y="202.1" font-size="5.8" fill="#1a1a1a" text-anchor="start" font-weight="normal" font-family="Liberation Sans" textLength="72.2" lengthAdjust="spacingAndGlyphs" stroke="#1a1a1a" stroke-width="0.12">WINDOW / DOOR CODE</text>
<rect x="1208" y="225.6" width="12" height="9.1" fill="none" stroke="#222" stroke-width="0.8" />
<text x="1214" y="232.3" font-size="5.5" fill="#222" text-anchor="middle" font-weight="normal" font-family="Liberation Sans" >MV</text>
<rect x="1249.7" y="226.2" width="83.3" height="6.8" fill="#5fd3f0" stroke="none" stroke-width="0" />
<text x="1249.7" y="231.8" font-size="5.8" fill="#2c6fd0" text-anchor="start" font-weight="normal" font-family="Liberation Sans" textLength="83.3" lengthAdjust="spacingAndGlyphs" stroke="#2c6fd0" stroke-width="0.08">MECHANICAL VENTILATION</text>
<rect x="1206.7" y="239.4" width="14.3" height="10.6" fill="none" stroke="#222" stroke-width="0.9" />
<line x1="1206.7" y1="244.7" x2="1221" y2="244.7" stroke="#222" stroke-width="0.8" />
<text x="1249.7" y="247.4" font-size="5.8" fill="#1a1a1a" text-anchor="start" font-weight="normal" font-family="Liberation Sans" textLength="67.5" lengthAdjust="spacingAndGlyphs" stroke="#1a1a1a" stroke-width="0.12">TILES FOR WET AREA</text>
<rect x="1208" y="260.5" width="12.5" height="9.5" fill="none" stroke="#222" stroke-width="0.8" />
<text x="1214.2" y="267.6" font-size="6" fill="#222" text-anchor="middle" font-weight="normal" font-family="Liberation Sans" >MB</text>
<text x="1249.7" y="266.8" font-size="5.8" fill="#1a1a1a" text-anchor="start" font-weight="normal" font-family="Liberation Sans" textLength="37.0" lengthAdjust="spacingAndGlyphs" stroke="#1a1a1a" stroke-width="0.12">METER BOX</text>
<circle cx="1214.2" cy="283.3" r="6.3" fill="none" stroke="#222" stroke-width="0.9"/>
<text x="1249.7" y="286.0" font-size="5.8" fill="#1a1a1a" text-anchor="start" font-weight="normal" font-family="Liberation Sans" textLength="92.5" lengthAdjust="spacingAndGlyphs" stroke="#1a1a1a" stroke-width="0.12">HOT WATER CYLINDER (HWC)</text>
<circle cx="1214.2" cy="300" r="2.9" fill="#000"/>
<text x="1249.7" y="302.6" font-size="5.8" fill="#1a1a1a" text-anchor="start" font-weight="normal" font-family="Liberation Sans" textLength="89.5" lengthAdjust="spacingAndGlyphs" stroke="#1a1a1a" stroke-width="0.12">FLOOR WASTE GULLY (FWG)</text>
<rect x="1203.9" y="320" width="26.4" height="2.8" fill="#555" stroke="#111" stroke-width="0.8" />
<text x="1249.2" y="323.5" font-size="5.8" fill="#1a1a1a" text-anchor="start" font-weight="normal" font-family="Liberation Sans" textLength="99.1" lengthAdjust="spacingAndGlyphs" stroke="#1a1a1a" stroke-width="0.12">INTERNAL LOAD-BEARING WALL</text>
<rect x="1203.9" y="336" width="26.4" height="2.8" fill="#5ea8a0" stroke="#111" stroke-width="0.8" />
<line x1="1205" y1="337.4" x2="1229" y2="337.4" stroke="#bfe" stroke-width="0.6" stroke-dasharray="1.5 1.5" />
<text x="1249.2" y="339.6" font-size="5.8" fill="#1a1a1a" text-anchor="start" font-weight="normal" font-family="Liberation Sans" textLength="74.1" lengthAdjust="spacingAndGlyphs" stroke="#1a1a1a" stroke-width="0.12">SED FULL HEIGHT WALL</text>
<line x1="1202.1" y1="352.1" x2="1338" y2="352.1" stroke="#333" stroke-width="0.9" />
<line x1="1202.1" y1="367.5" x2="1338" y2="367.5" stroke="#333" stroke-width="0.9" />
<line x1="1202.1" y1="382.8" x2="1338" y2="382.8" stroke="#333" stroke-width="0.9" />
<line x1="1202.1" y1="397.8" x2="1338" y2="397.8" stroke="#333" stroke-width="0.9" />
<line x1="1202.1" y1="413.1" x2="1338" y2="413.1" stroke="#333" stroke-width="0.9" />
<line x1="1202.1" y1="428.2" x2="1338" y2="428.2" stroke="#333" stroke-width="0.9" />
<line x1="1202.1" y1="443.5" x2="1338" y2="443.5" stroke="#333" stroke-width="0.9" />
<line x1="1202.1" y1="458.5" x2="1338" y2="458.5" stroke="#333" stroke-width="0.9" />
<line x1="1202.1" y1="474.4" x2="1338" y2="474.4" stroke="#333" stroke-width="0.9" />
<text x="1205.9" y="361.8" font-size="5.7" fill="#1a1a1a" text-anchor="start" font-weight="normal" font-family="Liberation Sans" textLength="64.4" lengthAdjust="spacingAndGlyphs" stroke="#1a1a1a" stroke-width="0.12">FRAMING SCHEDULE</text>
<text x="1288.3" y="358.9" font-size="5.7" fill="#1a1a1a" text-anchor="start" font-weight="normal" font-family="Liberation Sans" textLength="36.1" lengthAdjust="spacingAndGlyphs" stroke="#1a1a1a" stroke-width="0.12">WIND ZONE</text>
<text x="1299.2" y="366.1" font-size="5.7" fill="#1a1a1a" text-anchor="start" font-weight="normal" font-family="Liberation Sans" textLength="15.1" lengthAdjust="spacingAndGlyphs" stroke="#1a1a1a" stroke-width="0.12">HIGH</text>
<text x="1205.9" y="373.9" font-size="5.7" fill="#1a1a1a" text-anchor="start" font-weight="normal" font-family="Liberation Sans" textLength="36.1" lengthAdjust="spacingAndGlyphs" stroke="#1a1a1a" stroke-width="0.12">WALL STUD</text>
<text x="1205.9" y="380.5" font-size="5.7" fill="#1a1a1a" text-anchor="start" font-weight="normal" font-family="Liberation Sans" textLength="65.0" lengthAdjust="spacingAndGlyphs" stroke="#1a1a1a" stroke-width="0.12">(NON-LOADBEARING)</text>
<text x="1282.5" y="378.8" font-size="5.7" fill="#1a1a1a" text-anchor="start" font-weight="normal" font-family="Liberation Sans" textLength="70.2" lengthAdjust="spacingAndGlyphs" stroke="#1a1a1a" stroke-width="0.12">4.8M 140X70 @ 300 C/C</text>
<text x="1205.9" y="392.4" font-size="5" fill="#1a1a1a" text-anchor="start" font-weight="normal" font-family="Liberation Sans" textLength="66.5" lengthAdjust="spacingAndGlyphs" stroke="#1a1a1a" stroke-width="0.12">REFER TO NZS 3604:2011</text>
<text x="1282.5" y="393.3" font-size="5.7" fill="#1a1a1a" text-anchor="start" font-weight="normal" font-family="Liberation Sans" textLength="70.2" lengthAdjust="spacingAndGlyphs" stroke="#1a1a1a" stroke-width="0.12">4.2M 140X45 @ 300 C/C</text>
<text x="1282.5" y="408.0" font-size="5.7" fill="#1a1a1a" text-anchor="start" font-weight="normal" font-family="Liberation Sans" textLength="67.3" lengthAdjust="spacingAndGlyphs" stroke="#1a1a1a" stroke-width="0.12">3.9M 90X90 @ 300 C/C</text>
<text x="1282.5" y="423.6" font-size="5.7" fill="#1a1a1a" text-anchor="start" font-weight="normal" font-family="Liberation Sans" textLength="67.3" lengthAdjust="spacingAndGlyphs" stroke="#1a1a1a" stroke-width="0.12">3.6M 90X70 @ 300 C/C</text>
<text x="1282.5" y="436.9" font-size="5.7" fill="#1a1a1a" text-anchor="start" font-weight="normal" font-family="Liberation Sans" textLength="67.3" lengthAdjust="spacingAndGlyphs" stroke="#1a1a1a" stroke-width="0.12">3.3M 90X70 @ 300 C/C</text>
<text x="1205.9" y="449.9" font-size="5.7" fill="#1a1a1a" text-anchor="start" font-weight="normal" font-family="Liberation Sans" textLength="33.2" lengthAdjust="spacingAndGlyphs" stroke="#1a1a1a" stroke-width="0.12">WALL NOG</text>
<text x="1205.9" y="456.8" font-size="5.7" fill="#1a1a1a" text-anchor="start" font-weight="normal" font-family="Liberation Sans" textLength="58.4" lengthAdjust="spacingAndGlyphs" stroke="#1a1a1a" stroke-width="0.12">(WEATHERBOARD)</text>
<text x="1282.5" y="454.2" font-size="5.7" fill="#1a1a1a" text-anchor="start" font-weight="normal" font-family="Liberation Sans" textLength="51.1" lengthAdjust="spacingAndGlyphs" stroke="#1a1a1a" stroke-width="0.12">90X45 @ 800 C/C</text>
<text x="1205.9" y="464.9" font-size="5.7" fill="#1a1a1a" text-anchor="start" font-weight="normal" font-family="Liberation Sans" textLength="33.2" lengthAdjust="spacingAndGlyphs" stroke="#1a1a1a" stroke-width="0.12">WALL NOG</text>
<text x="1205.9" y="472.7" font-size="5.7" fill="#1a1a1a" text-anchor="start" font-weight="normal" font-family="Liberation Sans" textLength="62.7" lengthAdjust="spacingAndGlyphs" stroke="#1a1a1a" stroke-width="0.12">(VERTICAL SHIPLAP)</text>
<text x="1282.5" y="469.3" font-size="5.7" fill="#1a1a1a" text-anchor="start" font-weight="normal" font-family="Liberation Sans" textLength="49.7" lengthAdjust="spacingAndGlyphs" stroke="#1a1a1a" stroke-width="0.12">90X45 @ 480C/C</text>
<text x="1205.9" y="482.6" font-size="5.7" fill="#1a1a1a" text-anchor="start" font-weight="normal" font-family="Liberation Sans" textLength="119.4" lengthAdjust="spacingAndGlyphs" stroke="#1a1a1a" stroke-width="0.12">ALL TIMBER  TO BE H1.2 TREATED AND</text>
<text x="1205.9" y="490.4" font-size="5.7" fill="#1a1a1a" text-anchor="start" font-weight="normal" font-family="Liberation Sans" textLength="35.5" lengthAdjust="spacingAndGlyphs" stroke="#1a1a1a" stroke-width="0.12">SG8 (U.N.O)</text>
<text x="1206.8" y="508.9" font-size="5.7" fill="#1a1a1a" text-anchor="start" font-weight="normal" font-family="Liberation Sans" textLength="88.7" lengthAdjust="spacingAndGlyphs" stroke="#1a1a1a" stroke-width="0.12">UNIT 1 FLOOR AREA=101.7m²</text>
<text x="1206.8" y="516.4" font-size="5.7" fill="#1a1a1a" text-anchor="start" font-weight="normal" font-family="Liberation Sans" textLength="85.8" lengthAdjust="spacingAndGlyphs" stroke="#1a1a1a" stroke-width="0.12">UNIT 2 FLOOR AREA=98.8m²</text>
<text x="1206.8" y="523.6" font-size="5.7" fill="#1a1a1a" text-anchor="start" font-weight="normal" font-family="Liberation Sans" textLength="84.9" lengthAdjust="spacingAndGlyphs" stroke="#1a1a1a" stroke-width="0.12">UNIT 3 FLOOR AREA=98.1m²</text>
<text x="1206.8" y="531.3" font-size="5.7" fill="#1a1a1a" text-anchor="start" font-weight="normal" font-family="Liberation Sans" textLength="84.9" lengthAdjust="spacingAndGlyphs" stroke="#1a1a1a" stroke-width="0.12">UNIT 4 FLOOR AREA=99.6m²</text>
<text x="1206.8" y="545.0" font-size="5.7" fill="#1a1a1a" text-anchor="start" font-weight="normal" font-family="Liberation Sans" textLength="97.4" lengthAdjust="spacingAndGlyphs" stroke="#1a1a1a" stroke-width="0.12">TOTAL BUILDING AREA=398.2m²</text>
<text x="1205.9" y="571.4" font-size="7" fill="#1a1a1a" text-anchor="start" font-weight="normal" font-family="Liberation Sans" textLength="88.7" lengthAdjust="spacingAndGlyphs" stroke="#1a1a1a" stroke-width="0.12">SINK OVERFLOW WITH A</text>
<text x="1205.9" y="579.5" font-size="7" fill="#1a1a1a" text-anchor="start" font-weight="normal" font-family="Liberation Sans" textLength="95.4" lengthAdjust="spacingAndGlyphs" stroke="#1a1a1a" stroke-width="0.12">SUITABLE TAP FLOW RATE</text>
<text x="1205.9" y="587.8" font-size="7" fill="#1a1a1a" text-anchor="start" font-weight="normal" font-family="Liberation Sans" textLength="52.9" lengthAdjust="spacingAndGlyphs" stroke="#1a1a1a" stroke-width="0.12">WILL BE USED.</text>
<path d="M1180 601.7 A5.19 5.19 0 0 1 1187.63 601.70 A5.19 5.19 0 0 1 1195.27 601.70 A5.19 5.19 0 0 1 1202.90 601.70 A5.19 5.19 0 0 1 1210.54 601.70 A5.19 5.19 0 0 1 1218.17 601.70 A5.19 5.19 0 0 1 1225.81 601.70 A5.19 5.19 0 0 1 1233.44 601.70 A5.19 5.19 0 0 1 1241.08 601.70 A5.19 5.19 0 0 1 1248.71 601.70 A5.19 5.19 0 0 1 1256.35 601.70 A5.19 5.19 0 0 1 1263.99 601.70 A5.19 5.19 0 0 1 1271.62 601.70 A5.19 5.19 0 0 1 1279.26 601.70 A5.19 5.19 0 0 1 1286.89 601.70 A5.19 5.19 0 0 1 1294.53 601.70 A5.19 5.19 0 0 1 1302.16 601.70 A5.19 5.19 0 0 1 1309.80 601.70 A5.19 5.19 0 0 1 1317.43 601.70 A5.19 5.19 0 0 1 1325.07 601.70 A5.19 5.19 0 0 1 1332.70 601.70 A4.96 4.96 0 0 1 1332.70 608.99 A4.96 4.96 0 0 1 1332.70 616.28 A4.96 4.96 0 0 1 1332.70 623.56 A4.96 4.96 0 0 1 1332.70 630.85 A4.96 4.96 0 0 1 1332.70 638.14 A4.96 4.96 0 0 1 1332.70 645.42 A4.96 4.96 0 0 1 1332.70 652.71 A4.96 4.96 0 0 1 1332.70 660.00 A4.96 4.96 0 0 1 1332.70 667.29 A4.96 4.96 0 0 1 1332.70 674.58 A4.96 4.96 0 0 1 1332.70 681.86 A4.96 4.96 0 0 1 1332.70 689.15 A4.96 4.96 0 0 1 1332.70 696.44 A4.96 4.96 0 0 1 1332.70 703.72 A4.96 4.96 0 0 1 1332.70 711.01 A4.96 4.96 0 0 1 1332.70 718.30 A5.19 5.19 0 0 1 1325.07 718.30 A5.19 5.19 0 0 1 1317.43 718.30 A5.19 5.19 0 0 1 1309.80 718.30 A5.19 5.19 0 0 1 1302.16 718.30 A5.19 5.19 0 0 1 1294.53 718.30 A5.19 5.19 0 0 1 1286.89 718.30 A5.19 5.19 0 0 1 1279.26 718.30 A5.19 5.19 0 0 1 1271.62 718.30 A5.19 5.19 0 0 1 1263.99 718.30 A5.19 5.19 0 0 1 1256.35 718.30 A5.19 5.19 0 0 1 1248.71 718.30 A5.19 5.19 0 0 1 1241.08 718.30 A5.19 5.19 0 0 1 1233.44 718.30 A5.19 5.19 0 0 1 1225.81 718.30 A5.19 5.19 0 0 1 1218.17 718.30 A5.19 5.19 0 0 1 1210.54 718.30 A5.19 5.19 0 0 1 1202.90 718.30 A5.19 5.19 0 0 1 1195.27 718.30 A5.19 5.19 0 0 1 1187.63 718.30 A5.19 5.19 0 0 1 1180.00 718.30 A4.96 4.96 0 0 1 1180.00 711.01 A4.96 4.96 0 0 1 1180.00 703.72 A4.96 4.96 0 0 1 1180.00 696.44 A4.96 4.96 0 0 1 1180.00 689.15 A4.96 4.96 0 0 1 1180.00 681.86 A4.96 4.96 0 0 1 1180.00 674.58 A4.96 4.96 0 0 1 1180.00 667.29 A4.96 4.96 0 0 1 1180.00 660.00 A4.96 4.96 0 0 1 1180.00 652.71 A4.96 4.96 0 0 1 1180.00 645.42 A4.96 4.96 0 0 1 1180.00 638.14 A4.96 4.96 0 0 1 1180.00 630.85 A4.96 4.96 0 0 1 1180.00 623.56 A4.96 4.96 0 0 1 1180.00 616.28 A4.96 4.96 0 0 1 1180.00 608.99 A4.96 4.96 0 0 1 1180.00 601.70Z" fill="none" stroke="#e0283c" stroke-width="1.15"/>
<text x="1206" y="611.6" font-size="7.2" fill="#1a1a1a" text-anchor="start" font-weight="normal" font-family="Liberation Sans" textLength="106.3" lengthAdjust="spacingAndGlyphs" stroke="#1a1a1a" stroke-width="0.25">AN ADEQUATE SIGNAGE WILL</text>
<text x="1206" y="619.9" font-size="7.2" fill="#1a1a1a" text-anchor="start" font-weight="normal" font-family="Liberation Sans" textLength="66.7" lengthAdjust="spacingAndGlyphs" stroke="#1a1a1a" stroke-width="0.25">BE PROVIDED FOR</text>
<text x="1206" y="627.9" font-size="7.2" fill="#1a1a1a" text-anchor="start" font-weight="normal" font-family="Liberation Sans" textLength="113" lengthAdjust="spacingAndGlyphs" stroke="#1a1a1a" stroke-width="0.25">ACCESSIBLE ROUTES AND FOR</text>
<text x="1206" y="636.3" font-size="7.2" fill="#1a1a1a" text-anchor="start" font-weight="normal" font-family="Liberation Sans" textLength="107.3" lengthAdjust="spacingAndGlyphs" stroke="#1a1a1a" stroke-width="0.25">FACILITIES FOR PEOPLE WITH</text>
<text x="1206" y="644.6" font-size="7.2" fill="#1a1a1a" text-anchor="start" font-weight="normal" font-family="Liberation Sans" textLength="48" lengthAdjust="spacingAndGlyphs" stroke="#1a1a1a" stroke-width="0.25">DISABILITIES.</text>
<rect x="1208.3" y="653.3" width="31" height="17.4" fill="none" stroke="#222" stroke-width="0.9" />
<circle cx="1216.5" cy="662" r="6.3" fill="none" stroke="#222" stroke-width="0.9"/><circle cx="1231" cy="662" r="6.3" fill="none" stroke="#222" stroke-width="0.9"/>
<text x="1244.3" y="657.1" font-size="5.9" fill="#1a1a1a" text-anchor="start" font-weight="normal" font-family="Liberation Sans" textLength="84.7" lengthAdjust="spacingAndGlyphs" stroke="#1a1a1a" stroke-width="0.15">GAS BOTTLE WITH SEISMIC</text>
<text x="1244.3" y="663.8" font-size="5.9" fill="#1a1a1a" text-anchor="start" font-weight="normal" font-family="Liberation Sans" textLength="78.4" lengthAdjust="spacingAndGlyphs" stroke="#1a1a1a" stroke-width="0.15">RESTRAINTS PLACED ON</text>
<text x="1244.3" y="670.8" font-size="5.9" fill="#1a1a1a" text-anchor="start" font-weight="normal" font-family="Liberation Sans" textLength="50.0" lengthAdjust="spacingAndGlyphs" stroke="#1a1a1a" stroke-width="0.15">CONCRETE PAD</text>
<rect x="1207.7" y="680" width="13.3" height="9" fill="none" stroke="#222" stroke-width="0.8" />
<text x="1214.3" y="687" font-size="6" fill="#222" text-anchor="middle" font-weight="normal" font-family="Liberation Sans" >GH</text>
<text x="1250.7" y="686.4" font-size="5.9" fill="#1a1a1a" text-anchor="start" font-weight="normal" font-family="Liberation Sans" textLength="80.0" lengthAdjust="spacingAndGlyphs" stroke="#1a1a1a" stroke-width="0.15">GAS HOT WATER HEATER</text>
<text x="1206.7" y="703.1" font-size="5.9" fill="#1a1a1a" text-anchor="start" font-weight="normal" font-family="Liberation Sans" textLength="106.0" lengthAdjust="spacingAndGlyphs" stroke="#1a1a1a" stroke-width="0.15">NO PENETRATION FOR SERVICES/</text>
<text x="1206.7" y="710.1" font-size="5.9" fill="#1a1a1a" text-anchor="start" font-weight="normal" font-family="Liberation Sans" textLength="100.6" lengthAdjust="spacingAndGlyphs" stroke="#1a1a1a" stroke-width="0.15">VENTS PENETRATING THROUGH</text>
<text x="1206.7" y="717.1" font-size="5.9" fill="#1a1a1a" text-anchor="start" font-weight="normal" font-family="Liberation Sans" textLength="46.0" lengthAdjust="spacingAndGlyphs" stroke="#1a1a1a" stroke-width="0.15">BLOCK WALLS.</text>
<path d="M1260 745 H1280 V748 H1284 V752 H1288 V776 H1284 V780 H1280 V784 H1260 V780 H1256 V776 H1252 V752 H1256 V748 H1260 Z" fill="none" stroke="#222" stroke-width="1"/>
<path d="M1254 750 L1286 782 M1257 747 L1289 779 M1286 747 L1254 779 M1283 744.5 L1251 776.5" stroke="#222" stroke-width="0.9"/>
<path d="M1262 746 H1278 L1270 754 Z M1262 783 H1278 L1270 775 Z M1253 756 V772 L1261 764 Z M1287 756 V772 L1279 764 Z" fill="#fff" stroke="none"/>
<text x="1270" y="754.5" font-size="10" fill="#222" text-anchor="middle" font-weight="normal" font-family="Liberation Sans" >N</text>
<text x="1270" y="781" font-size="10" fill="#222" text-anchor="middle" font-weight="normal" font-family="Liberation Sans" >S</text>
<text x="1258" y="768" font-size="10" fill="#222" text-anchor="middle" font-weight="normal" font-family="Liberation Sans" >W</text>
<text x="1283" y="768" font-size="10" fill="#222" text-anchor="middle" font-weight="normal" font-family="Liberation Sans" >E</text>
<text x="1236.7" y="795.7" font-size="9.5" fill="#1a1a1a" text-anchor="start" font-weight="normal" font-family="Liberation Sans" textLength="70.0" lengthAdjust="spacingAndGlyphs" stroke="#1a1a1a" stroke-width="0.1">ELEVATION KEY</text>
<circle cx="1347.3" cy="775" r="16" fill="none" stroke="#222" stroke-width="1.1"/>
<path d="M1336 782 L1346 767 L1344 764.5 L1358 763 L1354 776 L1352 774 L1344 786 Z M1341 781 L1350 770 M1346 786 L1356 770" fill="none" stroke="#222" stroke-width="1"/>
<polygon points="944 629.1 931.6 640.5 944 651.9" fill="#000"/>
<circle cx="944" cy="640.5" r="7.4" fill="#fff" stroke="#000" stroke-width="0.9"/>
<text x="944" y="642.5" font-size="5.6" fill="#000" text-anchor="middle" font-weight="normal" font-family="Liberation Sans" stroke="#000" stroke-width="0.12">308</text>
<text x="928" y="643" font-size="5.5" fill="#000" text-anchor="start" font-weight="normal" font-family="Liberation Sans" >5</text>
<polygon points="508.70000000000005 514.1 521.1 501.70000000000005 533.5 514.1" fill="#000"/>
<circle cx="521.1" cy="514.1" r="7.4" fill="#fff" stroke="#000" stroke-width="0.9"/>
<line x1="513.7" y1="514.1" x2="528.5" y2="514.1" stroke="#000" stroke-width="1.3" />
<text x="521.1" y="512.8000000000001" font-size="5.2" fill="#000" text-anchor="middle" font-weight="normal" font-family="Liberation Sans" stroke="#000" stroke-width="0.12">1</text>
<text x="521.1" y="519.7" font-size="5.2" fill="#000" text-anchor="middle" font-weight="normal" font-family="Liberation Sans" stroke="#000" stroke-width="0.12">401</text>
<path d="M691 237 L697 232.5 L703 237 M693.5 235 H700.5" fill="none" stroke="#111" stroke-width="1.1"/>
<path d="M881 238 Q882 232 889 232.5 Q896 233 897 238" fill="none" stroke="#222" stroke-width="0.9"/>
</svg><!--/PAGE-->
<!--DIALOG--><div id="dlg" style="position:absolute;left:635px;top:237px;width:405px;height:400px;background:#f0f0f0;border-radius:8px;box-shadow:0 0 0 1px rgba(0,0,0,0.16),0 18px 44px rgba(0,0,0,0.44),0 3px 12px rgba(0,0,0,0.16);overflow:hidden">
  <div style="position:absolute;left:0;top:0;width:405px;height:26px;background:#eef3f9"></div>
  <div style="position:absolute;left:7px;top:5px;width:14px;height:14px;background:#e8731f;border-radius:2.5px"></div>
  <div style="position:absolute;left:7.5px;top:7px;width:13px;font-size:7px;line-height:10px;font-weight:bold;color:#fde3cc;letter-spacing:-0.6px;text-align:center;font-family:'Liberation Sans',sans-serif">PDF</div>
  <div style="position:absolute;left:25.7px;top:5px;font-size:11px;line-height:14px;color:#1a1a1a;white-space:nowrap;transform:scaleX(0.92);transform-origin:0 0">Batch create categories</div>
  <svg width="12" height="12" style="position:absolute;left:386px;top:7px;overflow:visible"><path d="M1.5 1.5 L10.5 10.5 M10.5 1.5 L1.5 10.5" stroke="#333" stroke-width="1.1" fill="none"/></svg>
  <svg width="14" height="14" style="position:absolute;left:11px;top:43px;overflow:visible"><circle cx="7.1" cy="7" r="5.6" fill="none" stroke="#5aa2e6" stroke-width="1.1"/><circle cx="7.1" cy="4.1" r="0.8" fill="#5aa2e6"/><path d="M7.1 5.9 V10.2 M6 10.3 H8.2 M6.2 5.9 H7.1" stroke="#5aa2e6" stroke-width="1" fill="none"/></svg>
  <div style="position:absolute;left:33.4px;top:37px;font-size:11.4px;line-height:14.8px;color:#1a1a1a;white-space:nowrap">Please enter or paste the categories you want to create. Each line will<br>create one category, and each line should not exceed 30 characters.</div>
  <div style="position:absolute;left:9.8px;top:72px;width:385.5px;height:291.5px;background:#fff;border:1px solid #dcdcdc;border-radius:3px"></div>
  <div style="position:absolute;left:14.7px;top:76.5px;font-size:11.2px;line-height:14.8px;color:#111;white-space:nowrap;transform:scaleX(0.955);transform-origin:0 0">201GFLP-WALL-240mm<br>201GFLP-WALL-140mm<br>201GFLP-VENT<br>201GFLP-Accessible route<br>201GFLP-Accessible toilet<br>201GFLP-METER BOX<br>201GFLP-MECHANICAL VENTILATION</div>
  <div style="position:absolute;left:260.5px;top:370px;width:62px;height:19.5px;background:#dae8f6;border:1px solid #3f78c0;border-radius:3px"></div>
  <div style="position:absolute;left:260.5px;top:372px;width:62px;text-align:center;font-size:11.3px;line-height:15px;color:#a39066">Create</div>
  <div style="position:absolute;left:330.5px;top:370px;width:62px;height:19.5px;background:#fdfdfd;border:1px solid #d2d2d2;border-radius:3px"></div>
  <div style="position:absolute;left:330.5px;top:372px;width:62px;text-align:center;font-size:11.3px;line-height:15px;color:#1a1a1a">Cancel</div>
</div>
<svg width="20" height="24" style="position:absolute;left:932px;top:624px;overflow:visible"><path d="M1 1 L1 16.5 L4.6 13.2 L7.3 19.2 L9.8 18.1 L7.2 12.2 L12 12.2 Z" fill="#fff" stroke="#000" stroke-width="1" stroke-linejoin="round"/></svg>
<!--/DIALOG-->
</body></html>
